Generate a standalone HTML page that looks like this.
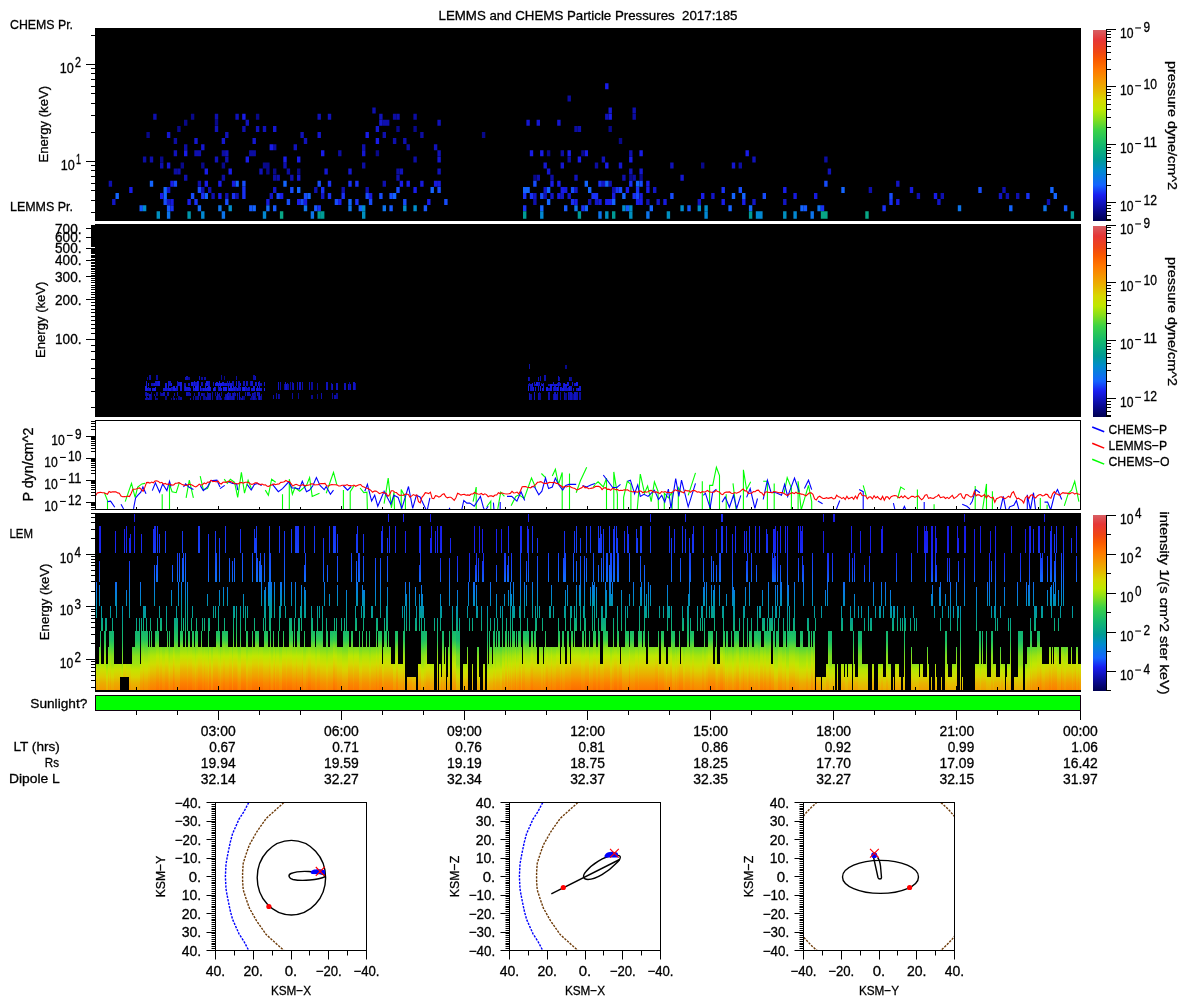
<!DOCTYPE html><html><head><meta charset="utf-8"><style>html,body{margin:0;padding:0;background:#fff;width:1200px;height:1000px;overflow:hidden}svg{display:block;will-change:transform}text{font-family:"Liberation Sans",sans-serif;stroke:#000;stroke-width:0.3px}</style></head><body><svg width="1200" height="1000" viewBox="0 0 1200 1000" font-family="Liberation Sans, sans-serif" fill="#000">
<defs>
<linearGradient id="cm" x1="0" y1="1" x2="0" y2="0"><stop offset="0.000" stop-color="#000050"/><stop offset="0.060" stop-color="#0a0a96"/><stop offset="0.136" stop-color="#191ef0"/><stop offset="0.188" stop-color="#1464ff"/><stop offset="0.267" stop-color="#008ccd"/><stop offset="0.319" stop-color="#009b96"/><stop offset="0.398" stop-color="#14b96e"/><stop offset="0.476" stop-color="#3cd246"/><stop offset="0.529" stop-color="#82de1e"/><stop offset="0.581" stop-color="#bee800"/><stop offset="0.634" stop-color="#d7d700"/><stop offset="0.686" stop-color="#e8b400"/><stop offset="0.738" stop-color="#f59600"/><stop offset="0.790" stop-color="#ff7800"/><stop offset="0.843" stop-color="#fa5a00"/><stop offset="0.885" stop-color="#f04614"/><stop offset="0.948" stop-color="#e63737"/><stop offset="1.000" stop-color="#d75f64"/></linearGradient>
</defs>
<rect width="1200" height="1000" fill="#fff"/>
<text x="588" y="20" font-size="13.5" text-anchor="middle" textLength="299" lengthAdjust="spacingAndGlyphs">LEMMS and CHEMS Particle Pressures&#160; 2017:185</text>
<rect x="95" y="28" width="986" height="193" fill="#000"/>
<path d="M95 161.5h-9M95 64.5h-9M95 212.5h-4M95 200.5h-4M95 190.5h-4M95 183.5h-4M95 176.5h-4M95 170.5h-4M95 165.5h-4M95 132.5h-4M95 115.5h-4M95 103.5h-4M95 93.5h-4M95 86.5h-4M95 79.5h-4M95 73.5h-4M95 68.5h-4M95 35.5h-4" stroke="#000" stroke-width="1" fill="none"/>
<text x="81" y="67.0" font-size="13.8" text-anchor="end" textLength="6" lengthAdjust="spacingAndGlyphs">2</text>
<text x="73.8" y="73.0" font-size="13.8" text-anchor="end" textLength="14" lengthAdjust="spacingAndGlyphs">10</text>
<text x="81" y="164.0" font-size="13.8" text-anchor="end" textLength="5" lengthAdjust="spacingAndGlyphs">1</text>
<text x="74.8" y="170.0" font-size="13.8" text-anchor="end" textLength="14" lengthAdjust="spacingAndGlyphs">10</text>
<text x="10" y="29" font-size="13.5" textLength="63" lengthAdjust="spacingAndGlyphs">CHEMS Pr.</text>
<text x="10" y="210.8" font-size="13.5" textLength="63" lengthAdjust="spacingAndGlyphs">LEMMS Pr.</text>
<text transform="translate(48.3,124.2) rotate(-90)" font-size="13.5" text-anchor="middle" textLength="76.5" lengthAdjust="spacingAndGlyphs">Energy (keV)</text>
<rect x="95" y="224" width="986" height="193" fill="#000"/>
<path d="M95 339.5h-9M95 299.5h-9M95 276.5h-9M95 260.5h-9M95 248.5h-9M95 237.5h-9M95 228.5h-9M95 407.5h-4M95 391.5h-4M95 378.5h-4M95 368.5h-4M95 359.5h-4M95 351.5h-4M95 345.5h-4M95 333.5h-4M95 328.5h-4M95 324.5h-4M95 320.5h-4M95 316.5h-4M95 312.5h-4M95 309.5h-4M95 305.5h-4M95 302.5h-4M95 297.5h-4M95 294.5h-4M95 292.5h-4M95 289.5h-4M95 287.5h-4M95 285.5h-4M95 282.5h-4M95 280.5h-4M95 278.5h-4M95 275.5h-4M95 273.5h-4M95 271.5h-4M95 269.5h-4M95 268.5h-4M95 266.5h-4M95 265.5h-4M95 263.5h-4M95 262.5h-4M95 259.5h-4M95 257.5h-4M95 256.5h-4M95 255.5h-4M95 253.5h-4M95 252.5h-4M95 251.5h-4M95 250.5h-4M95 249.5h-4M95 246.5h-4M95 245.5h-4M95 244.5h-4M95 243.5h-4M95 242.5h-4M95 241.5h-4M95 240.5h-4M95 239.5h-4M95 238.5h-4M95 236.5h-4M95 235.5h-4M95 234.5h-4M95 234.5h-4M95 233.5h-4M95 232.5h-4M95 231.5h-4M95 230.5h-4M95 229.5h-4M95 228.5h-4M95 227.5h-4M95 226.5h-4M95 225.5h-4M95 225.5h-4" stroke="#000" stroke-width="1" fill="none"/>
<text x="81.5" y="343.90000000000003" font-size="13.8" text-anchor="end" textLength="26.5" lengthAdjust="spacingAndGlyphs">100.</text>
<text x="81.5" y="304.5854825662841" font-size="13.8" text-anchor="end" textLength="26.5" lengthAdjust="spacingAndGlyphs">200.</text>
<text x="81.5" y="281.5879641336121" font-size="13.8" text-anchor="end" textLength="26.5" lengthAdjust="spacingAndGlyphs">300.</text>
<text x="81.5" y="265.2709651325681" font-size="13.8" text-anchor="end" textLength="26.5" lengthAdjust="spacingAndGlyphs">400.</text>
<text x="81.5" y="252.61451743371597" font-size="13.8" text-anchor="end" textLength="26.5" lengthAdjust="spacingAndGlyphs">500.</text>
<text x="81.5" y="242.2734466998962" font-size="13.8" text-anchor="end" textLength="26.5" lengthAdjust="spacingAndGlyphs">600.</text>
<text x="81.5" y="233.53019597413805" font-size="13.8" text-anchor="end" textLength="26.5" lengthAdjust="spacingAndGlyphs">700.</text>
<text transform="translate(44.6,319.8) rotate(-90)" font-size="13.5" text-anchor="middle" textLength="76.5" lengthAdjust="spacingAndGlyphs">Energy (keV)</text>
<rect x="95.5" y="420.5" width="985" height="89" fill="#fff" stroke="#000" stroke-width="1"/>
<path d="M95 502.5h-9M95 480.5h-9M95 458.5h-9M95 436.5h-9M95 509.5h-4M95 507.5h-4M95 505.5h-4M95 504.5h-4M95 503.5h-4M95 495.5h-4M95 492.5h-4M95 489.5h-4M95 487.5h-4M95 485.5h-4M95 483.5h-4M95 482.5h-4M95 481.5h-4M95 473.5h-4M95 470.5h-4M95 467.5h-4M95 465.5h-4M95 463.5h-4M95 461.5h-4M95 460.5h-4M95 459.5h-4M95 451.5h-4M95 448.5h-4M95 445.5h-4M95 443.5h-4M95 441.5h-4M95 439.5h-4M95 438.5h-4M95 437.5h-4M95 429.5h-4M95 426.5h-4M95 423.5h-4M95 421.5h-4" stroke="#000" stroke-width="1" fill="none"/>
<text x="81.5" y="439.0" font-size="13.8" text-anchor="end" textLength="6.6" lengthAdjust="spacingAndGlyphs">9</text>
<rect x="66.9" y="434.9" width="5.8" height="1.1" fill="#000"/>
<text x="64.7" y="445.0" font-size="13.8" text-anchor="end" textLength="13.5" lengthAdjust="spacingAndGlyphs">10</text>
<text x="81.5" y="461.0" font-size="13.8" text-anchor="end" textLength="13.5" lengthAdjust="spacingAndGlyphs">10</text>
<rect x="60.0" y="456.9" width="5.8" height="1.1" fill="#000"/>
<text x="57.8" y="467.0" font-size="13.8" text-anchor="end" textLength="13.5" lengthAdjust="spacingAndGlyphs">10</text>
<text x="81.5" y="483.0" font-size="13.8" text-anchor="end" textLength="13.5" lengthAdjust="spacingAndGlyphs">11</text>
<rect x="60.0" y="478.9" width="5.8" height="1.1" fill="#000"/>
<text x="57.8" y="489.0" font-size="13.8" text-anchor="end" textLength="13.5" lengthAdjust="spacingAndGlyphs">10</text>
<text x="81.5" y="505.0" font-size="13.8" text-anchor="end" textLength="13.5" lengthAdjust="spacingAndGlyphs">12</text>
<rect x="60.0" y="500.9" width="5.8" height="1.1" fill="#000"/>
<text x="57.8" y="511.0" font-size="13.8" text-anchor="end" textLength="13.5" lengthAdjust="spacingAndGlyphs">10</text>
<text transform="translate(32.7,464.6) rotate(-90)" font-size="13.8" text-anchor="middle" textLength="74" lengthAdjust="spacingAndGlyphs">P dyn/cm^2</text>
<path d="M136.5 509V507M177.5 509V507M218.5 509V506M259.5 509V507M300.5 509V507M341.5 509V506M382.5 509V507M423.5 509V507M464.5 509V506M505.5 509V507M546.5 509V507M587.5 509V506M628.5 509V507M669.5 509V507M710.5 509V506M751.5 509V507M792.5 509V507M833.5 509V506M874.5 509V507M915.5 509V507M956.5 509V506M997.5 509V507M1038.5 509V507" stroke="#000" stroke-width="1" fill="none"/>
<path d="M1092.2 427L1104.2 431.8" stroke="#0000ff" stroke-width="1.5"/>
<text x="1108.5" y="433.6" font-size="13.5" textLength="58.5" lengthAdjust="spacingAndGlyphs">CHEMS−P</text>
<path d="M1092.2 443.3L1104.2 448.1" stroke="#ff0000" stroke-width="1.5"/>
<text x="1108.5" y="449.90000000000003" font-size="13.5" textLength="58.5" lengthAdjust="spacingAndGlyphs">LEMMS−P</text>
<path d="M1092.2 459.3L1104.2 464.1" stroke="#00ff00" stroke-width="1.5"/>
<text x="1108.5" y="465.90000000000003" font-size="13.5" textLength="61" lengthAdjust="spacingAndGlyphs">CHEMS−O</text>
<rect x="95" y="513" width="986" height="179" fill="#000"/>
<path d="M95 659.5h-9M95 606.5h-9M95 554.5h-9M95 687.5h-4M95 680.5h-4M95 675.5h-4M95 671.5h-4M95 667.5h-4M95 664.5h-4M95 661.5h-4M95 643.5h-4M95 634.5h-4M95 627.5h-4M95 622.5h-4M95 618.5h-4M95 615.5h-4M95 611.5h-4M95 609.5h-4M95 591.5h-4M95 581.5h-4M95 575.5h-4M95 570.5h-4M95 565.5h-4M95 562.5h-4M95 559.5h-4M95 556.5h-4M95 538.5h-4M95 529.5h-4M95 522.5h-4M95 517.5h-4M95 513.5h-4" stroke="#000" stroke-width="1" fill="none"/>
<text x="81" y="556.8" font-size="13.8" text-anchor="end" textLength="6.5" lengthAdjust="spacingAndGlyphs">4</text>
<text x="73.3" y="562.8" font-size="13.8" text-anchor="end" textLength="13.5" lengthAdjust="spacingAndGlyphs">10</text>
<text x="81" y="609.4" font-size="13.8" text-anchor="end" textLength="6.5" lengthAdjust="spacingAndGlyphs">3</text>
<text x="73.3" y="615.4" font-size="13.8" text-anchor="end" textLength="13.5" lengthAdjust="spacingAndGlyphs">10</text>
<text x="81" y="662.0" font-size="13.8" text-anchor="end" textLength="6.5" lengthAdjust="spacingAndGlyphs">2</text>
<text x="73.3" y="668.0" font-size="13.8" text-anchor="end" textLength="13.5" lengthAdjust="spacingAndGlyphs">10</text>
<text x="9.5" y="537.5" font-size="13.5" textLength="23.5" lengthAdjust="spacingAndGlyphs">LEM</text>
<text transform="translate(48.7,601.9) rotate(-90)" font-size="13.5" text-anchor="middle" textLength="76.5" lengthAdjust="spacingAndGlyphs">Energy (keV)</text>
<rect x="95.5" y="695.5" width="985" height="15" fill="#00ff00" stroke="#100010" stroke-width="1"/>
<text x="87.3" y="708" font-size="13.5" text-anchor="end" textLength="57" lengthAdjust="spacingAndGlyphs">Sunlight?</text>
<path d="M136.5 711v4M177.5 711v4M218.5 711v9M259.5 711v4M300.5 711v4M341.5 711v9M382.5 711v4M423.5 711v4M464.5 711v9M505.5 711v4M546.5 711v4M587.5 711v9M628.5 711v4M669.5 711v4M710.5 711v9M751.5 711v4M792.5 711v4M833.5 711v9M874.5 711v4M915.5 711v4M956.5 711v9M997.5 711v4M1038.5 711v4M1080.5 711v9" stroke="#000" stroke-width="1" fill="none"/>
<text x="235.6875" y="736" font-size="13.8" text-anchor="end" textLength="34.8" lengthAdjust="spacingAndGlyphs">03:00</text>
<text x="235.6875" y="752" font-size="13.8" text-anchor="end" textLength="26.5" lengthAdjust="spacingAndGlyphs">0.67</text>
<text x="235.6875" y="768" font-size="13.8" text-anchor="end" textLength="34.8" lengthAdjust="spacingAndGlyphs">19.94</text>
<text x="235.6875" y="784" font-size="13.8" text-anchor="end" textLength="34.8" lengthAdjust="spacingAndGlyphs">32.14</text>
<text x="358.77500000000003" y="736" font-size="13.8" text-anchor="end" textLength="34.8" lengthAdjust="spacingAndGlyphs">06:00</text>
<text x="358.77500000000003" y="752" font-size="13.8" text-anchor="end" textLength="26.5" lengthAdjust="spacingAndGlyphs">0.71</text>
<text x="358.77500000000003" y="768" font-size="13.8" text-anchor="end" textLength="34.8" lengthAdjust="spacingAndGlyphs">19.59</text>
<text x="358.77500000000003" y="784" font-size="13.8" text-anchor="end" textLength="34.8" lengthAdjust="spacingAndGlyphs">32.27</text>
<text x="481.86250000000007" y="736" font-size="13.8" text-anchor="end" textLength="34.8" lengthAdjust="spacingAndGlyphs">09:00</text>
<text x="481.86250000000007" y="752" font-size="13.8" text-anchor="end" textLength="26.5" lengthAdjust="spacingAndGlyphs">0.76</text>
<text x="481.86250000000007" y="768" font-size="13.8" text-anchor="end" textLength="34.8" lengthAdjust="spacingAndGlyphs">19.19</text>
<text x="481.86250000000007" y="784" font-size="13.8" text-anchor="end" textLength="34.8" lengthAdjust="spacingAndGlyphs">32.34</text>
<text x="604.9499999999999" y="736" font-size="13.8" text-anchor="end" textLength="34.8" lengthAdjust="spacingAndGlyphs">12:00</text>
<text x="604.9499999999999" y="752" font-size="13.8" text-anchor="end" textLength="26.5" lengthAdjust="spacingAndGlyphs">0.81</text>
<text x="604.9499999999999" y="768" font-size="13.8" text-anchor="end" textLength="34.8" lengthAdjust="spacingAndGlyphs">18.75</text>
<text x="604.9499999999999" y="784" font-size="13.8" text-anchor="end" textLength="34.8" lengthAdjust="spacingAndGlyphs">32.37</text>
<text x="728.0374999999999" y="736" font-size="13.8" text-anchor="end" textLength="34.8" lengthAdjust="spacingAndGlyphs">15:00</text>
<text x="728.0374999999999" y="752" font-size="13.8" text-anchor="end" textLength="26.5" lengthAdjust="spacingAndGlyphs">0.86</text>
<text x="728.0374999999999" y="768" font-size="13.8" text-anchor="end" textLength="34.8" lengthAdjust="spacingAndGlyphs">18.25</text>
<text x="728.0374999999999" y="784" font-size="13.8" text-anchor="end" textLength="34.8" lengthAdjust="spacingAndGlyphs">32.35</text>
<text x="851.125" y="736" font-size="13.8" text-anchor="end" textLength="34.8" lengthAdjust="spacingAndGlyphs">18:00</text>
<text x="851.125" y="752" font-size="13.8" text-anchor="end" textLength="26.5" lengthAdjust="spacingAndGlyphs">0.92</text>
<text x="851.125" y="768" font-size="13.8" text-anchor="end" textLength="34.8" lengthAdjust="spacingAndGlyphs">17.70</text>
<text x="851.125" y="784" font-size="13.8" text-anchor="end" textLength="34.8" lengthAdjust="spacingAndGlyphs">32.27</text>
<text x="974.2125" y="736" font-size="13.8" text-anchor="end" textLength="34.8" lengthAdjust="spacingAndGlyphs">21:00</text>
<text x="974.2125" y="752" font-size="13.8" text-anchor="end" textLength="26.5" lengthAdjust="spacingAndGlyphs">0.99</text>
<text x="974.2125" y="768" font-size="13.8" text-anchor="end" textLength="34.8" lengthAdjust="spacingAndGlyphs">17.09</text>
<text x="974.2125" y="784" font-size="13.8" text-anchor="end" textLength="34.8" lengthAdjust="spacingAndGlyphs">32.15</text>
<text x="1097.8" y="736" font-size="13.8" text-anchor="end" textLength="34.8" lengthAdjust="spacingAndGlyphs">00:00</text>
<text x="1097.8" y="752" font-size="13.8" text-anchor="end" textLength="26.5" lengthAdjust="spacingAndGlyphs">1.06</text>
<text x="1097.8" y="768" font-size="13.8" text-anchor="end" textLength="34.8" lengthAdjust="spacingAndGlyphs">16.42</text>
<text x="1097.8" y="784" font-size="13.8" text-anchor="end" textLength="34.8" lengthAdjust="spacingAndGlyphs">31.97</text>
<text x="59.8" y="751" font-size="13.5" text-anchor="end" textLength="46.3" lengthAdjust="spacingAndGlyphs">LT (hrs)</text>
<text x="59.0" y="767" font-size="13.5" text-anchor="end" textLength="14.2" lengthAdjust="spacingAndGlyphs">Rs</text>
<text x="59.8" y="783" font-size="13.5" text-anchor="end" textLength="50.9" lengthAdjust="spacingAndGlyphs">Dipole L</text>
<rect x="1093" y="30" width="13" height="191" fill="url(#cm)"/>
<path d="M1106.5 30V221" stroke="#000" stroke-width="1" fill="none"/>
<path d="M1106 29.5h10M1106 69.5h5M1106 59.5h5M1106 52.5h5M1106 46.5h5M1106 41.5h5M1106 37.5h5M1106 34.5h5M1106 31.5h5M1106 86.5h10M1106 127.5h5M1106 117.5h5M1106 109.5h5M1106 104.5h5M1106 99.5h5M1106 95.5h5M1106 92.5h5M1106 89.5h5M1106 144.5h10M1106 185.5h5M1106 174.5h5M1106 167.5h5M1106 161.5h5M1106 157.5h5M1106 153.5h5M1106 150.5h5M1106 147.5h5M1106 202.5h10M1106 219.5h5M1106 215.5h5M1106 211.5h5M1106 208.5h5M1106 205.5h5M1106 220.5h5" stroke="#000" stroke-width="1" fill="none"/>
<text x="1150.1999999999998" y="31.5" font-size="13.8" text-anchor="end" textLength="6.6" lengthAdjust="spacingAndGlyphs">9</text>
<rect x="1135.2" y="27.4" width="5.8" height="1.1" fill="#000"/>
<text x="1120" y="37.5" font-size="13.8" textLength="13.5" lengthAdjust="spacingAndGlyphs">10</text>
<text x="1157.1" y="89.3" font-size="13.8" text-anchor="end" textLength="13.5" lengthAdjust="spacingAndGlyphs">10</text>
<rect x="1135.2" y="85.2" width="5.8" height="1.1" fill="#000"/>
<text x="1120" y="95.3" font-size="13.8" textLength="13.5" lengthAdjust="spacingAndGlyphs">10</text>
<text x="1157.1" y="147.1" font-size="13.8" text-anchor="end" textLength="13.5" lengthAdjust="spacingAndGlyphs">11</text>
<rect x="1135.2" y="143.0" width="5.8" height="1.1" fill="#000"/>
<text x="1120" y="153.1" font-size="13.8" textLength="13.5" lengthAdjust="spacingAndGlyphs">10</text>
<text x="1157.1" y="204.89999999999998" font-size="13.8" text-anchor="end" textLength="13.5" lengthAdjust="spacingAndGlyphs">12</text>
<rect x="1135.2" y="200.8" width="5.8" height="1.1" fill="#000"/>
<text x="1120" y="210.89999999999998" font-size="13.8" textLength="13.5" lengthAdjust="spacingAndGlyphs">10</text>
<text transform="translate(1167.6,125.5) rotate(90)" font-size="13.5" text-anchor="middle" textLength="129" lengthAdjust="spacingAndGlyphs">pressure dyne/cm^2</text>
<rect x="1093" y="226" width="13" height="191" fill="url(#cm)"/>
<path d="M1106.5 226V417" stroke="#000" stroke-width="1" fill="none"/>
<path d="M1106 225.5h10M1106 265.5h5M1106 255.5h5M1106 248.5h5M1106 242.5h5M1106 237.5h5M1106 233.5h5M1106 230.5h5M1106 227.5h5M1106 282.5h10M1106 323.5h5M1106 313.5h5M1106 305.5h5M1106 300.5h5M1106 295.5h5M1106 291.5h5M1106 288.5h5M1106 285.5h5M1106 340.5h10M1106 381.5h5M1106 370.5h5M1106 363.5h5M1106 357.5h5M1106 353.5h5M1106 349.5h5M1106 346.5h5M1106 343.5h5M1106 398.5h10M1106 415.5h5M1106 411.5h5M1106 407.5h5M1106 404.5h5M1106 401.5h5M1106 416.5h5" stroke="#000" stroke-width="1" fill="none"/>
<text x="1150.1999999999998" y="227.5" font-size="13.8" text-anchor="end" textLength="6.6" lengthAdjust="spacingAndGlyphs">9</text>
<rect x="1135.2" y="223.4" width="5.8" height="1.1" fill="#000"/>
<text x="1120" y="233.5" font-size="13.8" textLength="13.5" lengthAdjust="spacingAndGlyphs">10</text>
<text x="1157.1" y="285.3" font-size="13.8" text-anchor="end" textLength="13.5" lengthAdjust="spacingAndGlyphs">10</text>
<rect x="1135.2" y="281.2" width="5.8" height="1.1" fill="#000"/>
<text x="1120" y="291.3" font-size="13.8" textLength="13.5" lengthAdjust="spacingAndGlyphs">10</text>
<text x="1157.1" y="343.1" font-size="13.8" text-anchor="end" textLength="13.5" lengthAdjust="spacingAndGlyphs">11</text>
<rect x="1135.2" y="339.0" width="5.8" height="1.1" fill="#000"/>
<text x="1120" y="349.1" font-size="13.8" textLength="13.5" lengthAdjust="spacingAndGlyphs">10</text>
<text x="1157.1" y="400.9" font-size="13.8" text-anchor="end" textLength="13.5" lengthAdjust="spacingAndGlyphs">12</text>
<rect x="1135.2" y="396.8" width="5.8" height="1.1" fill="#000"/>
<text x="1120" y="406.9" font-size="13.8" textLength="13.5" lengthAdjust="spacingAndGlyphs">10</text>
<text transform="translate(1167.6,321.5) rotate(90)" font-size="13.5" text-anchor="middle" textLength="129" lengthAdjust="spacingAndGlyphs">pressure dyne/cm^2</text>
<rect x="1093" y="515" width="13" height="176" fill="url(#cm)"/>
<path d="M1106.5 515V691" stroke="#000" stroke-width="1" fill="none"/>
<path d="M1106 515.5h10M1106 534.5h5M1106 554.5h10M1106 573.5h5M1106 593.5h10M1106 612.5h5M1106 632.5h10M1106 651.5h5M1106 671.5h10M1106 690.5h5" stroke="#000" stroke-width="1" fill="none"/>
<text x="1141.5" y="517.6" font-size="13.8" text-anchor="end" textLength="6.5" lengthAdjust="spacingAndGlyphs">4</text>
<text x="1120" y="523.6" font-size="13.8" textLength="13.5" lengthAdjust="spacingAndGlyphs">10</text>
<text x="1141.5" y="556.6" font-size="13.8" text-anchor="end" textLength="6.5" lengthAdjust="spacingAndGlyphs">2</text>
<text x="1120" y="562.6" font-size="13.8" textLength="13.5" lengthAdjust="spacingAndGlyphs">10</text>
<text x="1141.5" y="595.6" font-size="13.8" text-anchor="end" textLength="6.5" lengthAdjust="spacingAndGlyphs">0</text>
<text x="1120" y="601.6" font-size="13.8" textLength="13.5" lengthAdjust="spacingAndGlyphs">10</text>
<text x="1150.1999999999998" y="634.6" font-size="13.8" text-anchor="end" textLength="6.6" lengthAdjust="spacingAndGlyphs">2</text>
<rect x="1135.2" y="630.5" width="5.8" height="1.1" fill="#000"/>
<text x="1120" y="640.6" font-size="13.8" textLength="13.5" lengthAdjust="spacingAndGlyphs">10</text>
<text x="1150.1999999999998" y="673.6" font-size="13.8" text-anchor="end" textLength="6.6" lengthAdjust="spacingAndGlyphs">4</text>
<rect x="1135.2" y="669.5" width="5.8" height="1.1" fill="#000"/>
<text x="1120" y="679.6" font-size="13.8" textLength="13.5" lengthAdjust="spacingAndGlyphs">10</text>
<text transform="translate(1159.8,603.0) rotate(90)" font-size="13.5" text-anchor="middle" textLength="183" lengthAdjust="spacingAndGlyphs">intensity 1/(s cm^2 ster keV)</text>
<defs>
<linearGradient id="lg0" gradientUnits="userSpaceOnUse" x1="0" y1="513.0" x2="0" y2="690.0"><stop offset="0.000" stop-color="#1518d7"/><stop offset="0.153" stop-color="#171be3"/><stop offset="0.237" stop-color="#191eef"/><stop offset="0.311" stop-color="#1831f4"/><stop offset="0.356" stop-color="#1645f8"/><stop offset="0.407" stop-color="#1268fb"/><stop offset="0.463" stop-color="#087ce1"/><stop offset="0.525" stop-color="#008ec5"/><stop offset="0.593" stop-color="#009a9a"/><stop offset="0.633" stop-color="#07a589"/><stop offset="0.667" stop-color="#0eb07a"/><stop offset="0.718" stop-color="#12b672"/><stop offset="0.757" stop-color="#31cb51"/><stop offset="0.808" stop-color="#69da2c"/><stop offset="0.853" stop-color="#70db29"/><stop offset="0.887" stop-color="#a0e30f"/><stop offset="0.927" stop-color="#c7e200"/><stop offset="0.960" stop-color="#dbd000"/><stop offset="1.000" stop-color="#e6b800"/></linearGradient>
<linearGradient id="lg1" gradientUnits="userSpaceOnUse" x1="0" y1="513.0" x2="0" y2="690.0"><stop offset="0.000" stop-color="#161add"/><stop offset="0.153" stop-color="#181ce9"/><stop offset="0.237" stop-color="#1923f1"/><stop offset="0.311" stop-color="#1738f5"/><stop offset="0.356" stop-color="#164cfa"/><stop offset="0.407" stop-color="#116af7"/><stop offset="0.463" stop-color="#077ede"/><stop offset="0.525" stop-color="#0090bf"/><stop offset="0.593" stop-color="#009b95"/><stop offset="0.633" stop-color="#08a786"/><stop offset="0.667" stop-color="#0fb277"/><stop offset="0.718" stop-color="#16ba6c"/><stop offset="0.757" stop-color="#37cf4b"/><stop offset="0.808" stop-color="#79dc23"/><stop offset="0.853" stop-color="#89df1b"/><stop offset="0.887" stop-color="#b7e703"/><stop offset="0.927" stop-color="#d0db00"/><stop offset="0.960" stop-color="#e1c200"/><stop offset="1.000" stop-color="#ecac00"/></linearGradient>
<linearGradient id="lg2" gradientUnits="userSpaceOnUse" x1="0" y1="513.0" x2="0" y2="690.0"><stop offset="0.000" stop-color="#171be3"/><stop offset="0.153" stop-color="#191eef"/><stop offset="0.237" stop-color="#182af3"/><stop offset="0.311" stop-color="#173ef7"/><stop offset="0.356" stop-color="#1552fb"/><stop offset="0.407" stop-color="#106df4"/><stop offset="0.463" stop-color="#0681db"/><stop offset="0.525" stop-color="#0091ba"/><stop offset="0.593" stop-color="#029d93"/><stop offset="0.633" stop-color="#09a984"/><stop offset="0.667" stop-color="#11b475"/><stop offset="0.718" stop-color="#1cbe66"/><stop offset="0.757" stop-color="#40d344"/><stop offset="0.808" stop-color="#88df1b"/><stop offset="0.853" stop-color="#a0e30f"/><stop offset="0.887" stop-color="#c5e400"/><stop offset="0.927" stop-color="#d9d300"/><stop offset="0.960" stop-color="#e8b500"/><stop offset="1.000" stop-color="#f0a000"/></linearGradient>
<linearGradient id="lg3" gradientUnits="userSpaceOnUse" x1="0" y1="513.0" x2="0" y2="690.0"><stop offset="0.000" stop-color="#181ce7"/><stop offset="0.153" stop-color="#1922f1"/><stop offset="0.237" stop-color="#182ff4"/><stop offset="0.311" stop-color="#1643f8"/><stop offset="0.356" stop-color="#1558fc"/><stop offset="0.407" stop-color="#0f6ff2"/><stop offset="0.463" stop-color="#0583d9"/><stop offset="0.525" stop-color="#0092b6"/><stop offset="0.593" stop-color="#029f91"/><stop offset="0.633" stop-color="#0aaa82"/><stop offset="0.667" stop-color="#12b573"/><stop offset="0.718" stop-color="#21c161"/><stop offset="0.757" stop-color="#4cd53d"/><stop offset="0.808" stop-color="#92e116"/><stop offset="0.853" stop-color="#b1e606"/><stop offset="0.887" stop-color="#ccdf00"/><stop offset="0.927" stop-color="#dec900"/><stop offset="0.960" stop-color="#ebac00"/><stop offset="1.000" stop-color="#f49800"/></linearGradient>
<linearGradient id="lg4" gradientUnits="userSpaceOnUse" x1="0" y1="513.0" x2="0" y2="690.0"><stop offset="0.000" stop-color="#181dec"/><stop offset="0.153" stop-color="#1827f2"/><stop offset="0.237" stop-color="#1734f5"/><stop offset="0.311" stop-color="#1648f9"/><stop offset="0.356" stop-color="#155dfd"/><stop offset="0.407" stop-color="#0e70ef"/><stop offset="0.463" stop-color="#0485d6"/><stop offset="0.525" stop-color="#0093b2"/><stop offset="0.593" stop-color="#03a08f"/><stop offset="0.633" stop-color="#0bac80"/><stop offset="0.667" stop-color="#13b771"/><stop offset="0.718" stop-color="#25c45d"/><stop offset="0.757" stop-color="#58d736"/><stop offset="0.808" stop-color="#9de211"/><stop offset="0.853" stop-color="#c0e700"/><stop offset="0.887" stop-color="#d3da00"/><stop offset="0.927" stop-color="#e3bf00"/><stop offset="0.960" stop-color="#efa300"/><stop offset="1.000" stop-color="#f78f00"/></linearGradient>
<linearGradient id="lg5" gradientUnits="userSpaceOnUse" x1="0" y1="513.0" x2="0" y2="690.0"><stop offset="0.000" stop-color="#191ef0"/><stop offset="0.153" stop-color="#182cf3"/><stop offset="0.237" stop-color="#1739f6"/><stop offset="0.311" stop-color="#164dfa"/><stop offset="0.356" stop-color="#1462fe"/><stop offset="0.407" stop-color="#0d72ed"/><stop offset="0.463" stop-color="#0387d4"/><stop offset="0.525" stop-color="#0094ae"/><stop offset="0.593" stop-color="#04a28d"/><stop offset="0.633" stop-color="#0cad7e"/><stop offset="0.667" stop-color="#14b86f"/><stop offset="0.718" stop-color="#2ac758"/><stop offset="0.757" stop-color="#64d92f"/><stop offset="0.808" stop-color="#a7e40c"/><stop offset="0.853" stop-color="#c7e200"/><stop offset="0.887" stop-color="#d9d300"/><stop offset="0.927" stop-color="#e8b500"/><stop offset="0.960" stop-color="#f39b00"/><stop offset="1.000" stop-color="#fa8600"/></linearGradient>
<linearGradient id="lg6" gradientUnits="userSpaceOnUse" x1="0" y1="513.0" x2="0" y2="690.0"><stop offset="0.000" stop-color="#1923f1"/><stop offset="0.153" stop-color="#1831f4"/><stop offset="0.237" stop-color="#173ef7"/><stop offset="0.311" stop-color="#1552fb"/><stop offset="0.356" stop-color="#1365fe"/><stop offset="0.407" stop-color="#0c74eb"/><stop offset="0.463" stop-color="#0288d1"/><stop offset="0.525" stop-color="#0096aa"/><stop offset="0.593" stop-color="#05a38b"/><stop offset="0.633" stop-color="#0dae7c"/><stop offset="0.667" stop-color="#15ba6d"/><stop offset="0.718" stop-color="#2fca53"/><stop offset="0.757" stop-color="#70db29"/><stop offset="0.808" stop-color="#b1e606"/><stop offset="0.853" stop-color="#cedd00"/><stop offset="0.887" stop-color="#dec900"/><stop offset="0.927" stop-color="#ebac00"/><stop offset="0.960" stop-color="#f69200"/><stop offset="1.000" stop-color="#fd7e00"/></linearGradient>
<linearGradient id="lg7" gradientUnits="userSpaceOnUse" x1="0" y1="513.0" x2="0" y2="690.0"><stop offset="0.000" stop-color="#1828f2"/><stop offset="0.153" stop-color="#1736f5"/><stop offset="0.237" stop-color="#1643f8"/><stop offset="0.311" stop-color="#1558fc"/><stop offset="0.356" stop-color="#1367fb"/><stop offset="0.407" stop-color="#0b76e8"/><stop offset="0.463" stop-color="#018acf"/><stop offset="0.525" stop-color="#0097a6"/><stop offset="0.593" stop-color="#06a489"/><stop offset="0.633" stop-color="#0eb07a"/><stop offset="0.667" stop-color="#17bb6b"/><stop offset="0.718" stop-color="#33cd4f"/><stop offset="0.757" stop-color="#7bdd22"/><stop offset="0.808" stop-color="#bce801"/><stop offset="0.853" stop-color="#d5d800"/><stop offset="0.887" stop-color="#e3bf00"/><stop offset="0.927" stop-color="#efa300"/><stop offset="0.960" stop-color="#f98900"/><stop offset="1.000" stop-color="#ff7500"/></linearGradient>
<linearGradient id="lg8" gradientUnits="userSpaceOnUse" x1="0" y1="513.0" x2="0" y2="690.0"><stop offset="0.000" stop-color="#182df3"/><stop offset="0.153" stop-color="#173bf6"/><stop offset="0.237" stop-color="#1648f9"/><stop offset="0.311" stop-color="#155dfd"/><stop offset="0.356" stop-color="#1269f9"/><stop offset="0.407" stop-color="#0a78e6"/><stop offset="0.463" stop-color="#008ccc"/><stop offset="0.525" stop-color="#0098a2"/><stop offset="0.593" stop-color="#07a688"/><stop offset="0.633" stop-color="#0fb178"/><stop offset="0.667" stop-color="#19bc69"/><stop offset="0.718" stop-color="#38cf4a"/><stop offset="0.757" stop-color="#87df1c"/><stop offset="0.808" stop-color="#c1e600"/><stop offset="0.853" stop-color="#dbd000"/><stop offset="0.887" stop-color="#e8b500"/><stop offset="0.927" stop-color="#f39b00"/><stop offset="0.960" stop-color="#fc8100"/><stop offset="1.000" stop-color="#fd6d00"/></linearGradient>
</defs>
<path d="M134 514h1v8h-1zM99 526h1v27h-1zM134 526h1v27h-1zM440 526h1v27h-1zM474 526h1v27h-1zM851 526h1v27h-1zM882 526h1v27h-1zM924 526h1v27h-1zM926 526h1v27h-1zM957 526h1v27h-1zM965 526h1v27h-1zM1011 526h1v27h-1zM932 526h1v56h-1zM935 526h1v56h-1zM1029 526h1v80h-1zM995 526h1v105h-1zM482 529h1v24h-1zM501 529h1v24h-1zM881 529h1v24h-1zM974 529h1v53h-1zM927 531h1v22h-1zM925 531h1v51h-1zM958 538h1v15h-1zM476 553h1v29h-1zM483 553h1v29h-1zM828 553h1v29h-1zM832 553h1v29h-1zM849 553h1v29h-1zM854 553h1v29h-1zM896 553h1v29h-1zM911 553h1v29h-1zM827 553h1v53h-1zM440 558h1v24h-1zM478 558h1v24h-1zM852 558h1v24h-1zM99 561h1v21h-1zM482 561h1v21h-1zM958 561h1v21h-1zM991 561h1v21h-1zM475 565h1v17h-1zM473 582h2v24h-2zM490 582h1v24h-1zM843 582h2v24h-2zM873 582h1v24h-1zM881 582h1v24h-1zM940 582h1v24h-1zM956 582h1v24h-1zM96 582h1v36h-1zM99 585h1v21h-1zM932 585h1v21h-1zM1028 585h1v21h-1zM476 585h1v33h-1zM421 585h1v105h-1zM939 587h1v19h-1zM976 587h1v44h-1zM422 594h1v24h-1zM854 594h1v24h-1zM440 594h1v37h-1zM423 606h1v12h-1zM477 606h1v12h-1zM500 606h1v12h-1zM821 606h1v12h-1zM875 606h1v12h-1zM879 606h1v12h-1zM934 606h1v12h-1zM942 606h1v12h-1zM958 606h1v12h-1zM991 606h1v12h-1zM994 606h1v12h-1zM481 606h1v25h-1zM841 606h1v25h-1zM850 606h1v25h-1zM893 606h1v25h-1zM897 606h1v25h-1zM957 606h1v25h-1zM472 618h1v13h-1zM490 618h1v13h-1zM842 618h1v13h-1zM851 618h2v13h-2zM900 618h1v13h-1zM902 618h1v13h-1zM905 618h1v13h-1zM910 618h1v13h-1zM940 618h1v13h-1zM997 618h1v13h-1zM112 618h1v72h-1zM136 618h1v72h-1zM139 618h1v72h-1zM1010 618h1v72h-1zM109 631h1v59h-1zM111 631h1v59h-1zM113 631h1v59h-1zM135 631h1v59h-1zM137 631h2v59h-2zM422 631h2v59h-2zM489 631h1v59h-1zM828 631h1v59h-1zM886 631h2v59h-2zM946 631h1v59h-1zM979 631h1v59h-1zM982 631h1v59h-1zM991 631h2v59h-2zM99 647h1v43h-1zM132 647h3v43h-3zM477 647h2v43h-2zM490 647h2v43h-2zM495 647h1v43h-1zM500 647h2v43h-2zM911 647h1v43h-1zM927 647h1v43h-1zM956 647h1v43h-1zM1027 647h3v43h-3zM121 664h1v13h-1zM96 664h2v26h-2zM131 664h1v26h-1zM439 664h2v26h-2zM463 664h4v26h-4zM472 664h1v26h-1zM483 664h2v26h-2zM492 664h1v26h-1zM826 664h2v26h-2zM832 664h1v26h-1zM841 664h3v26h-3zM848 664h4v26h-4zM854 664h1v26h-1zM872 664h2v26h-2zM879 664h1v26h-1zM881 664h2v26h-2zM895 664h4v26h-4zM920 664h3v26h-3zM935 664h1v26h-1zM975 664h4v26h-4zM981 664h1v26h-1zM983 664h3v26h-3zM994 664h2v26h-2zM1001 664h2v26h-2zM1007 664h1v26h-1zM844 677h1v13h-1zM855 677h3v13h-3zM893 677h1v13h-1zM899 677h2v13h-2zM919 677h1v13h-1zM923 677h4v13h-4zM996 677h4v13h-4z" fill="url(#lg2)"/>
<path d="M823 514h1v8h-1zM833 514h2v8h-2zM964 514h1v8h-1zM479 526h1v27h-1zM870 526h1v27h-1zM917 526h1v27h-1zM947 526h2v27h-2zM964 526h1v27h-1zM980 526h1v27h-1zM931 526h1v56h-1zM1025 529h1v24h-1zM823 531h1v22h-1zM860 531h1v22h-1zM990 531h1v22h-1zM936 538h1v15h-1zM469 553h1v29h-1zM1004 553h1v29h-1zM1020 553h1v29h-1zM989 553h1v53h-1zM457 556h1v26h-1zM869 556h1v26h-1zM947 558h1v24h-1zM949 558h1v24h-1zM964 558h1v48h-1zM864 565h1v17h-1zM936 565h1v17h-1zM468 582h1v24h-1zM885 582h1v24h-1zM987 582h1v24h-1zM1017 582h1v24h-1zM1026 582h1v24h-1zM950 582h1v49h-1zM1004 587h1v19h-1zM825 590h1v16h-1zM890 590h1v28h-1zM457 590h1v100h-1zM931 594h1v12h-1zM945 594h1v12h-1zM858 606h1v12h-1zM861 606h1v12h-1zM880 606h1v12h-1zM883 606h1v12h-1zM891 606h1v12h-1zM894 606h1v12h-1zM913 606h1v12h-1zM948 606h1v12h-1zM953 606h1v12h-1zM1000 606h1v12h-1zM868 606h1v25h-1zM122 606h1v71h-1zM456 606h1v84h-1zM487 606h1v84h-1zM904 606h1v84h-1zM960 606h1v84h-1zM106 618h1v13h-1zM469 618h1v13h-1zM864 618h1v13h-1zM870 618h2v13h-2zM892 618h1v13h-1zM914 618h1v13h-1zM916 618h1v13h-1zM1008 618h1v13h-1zM459 618h1v72h-1zM458 631h1v59h-1zM829 631h3v59h-3zM853 631h1v59h-1zM858 631h4v59h-4zM945 631h1v59h-1zM980 631h1v59h-1zM986 631h1v59h-1zM1018 631h5v59h-5zM1000 647h1v43h-1zM98 664h1v26h-1zM106 664h2v26h-2zM488 664h1v26h-1zM833 664h2v26h-2zM837 664h1v26h-1zM845 664h2v26h-2zM862 664h6v26h-6zM878 664h1v26h-1zM880 664h1v26h-1zM888 664h3v26h-3zM912 664h7v26h-7zM928 664h1v26h-1zM947 664h1v26h-1zM952 664h4v26h-4zM993 664h1v26h-1zM1003 664h2v26h-2zM1008 664h2v26h-2zM1025 664h2v26h-2zM479 677h1v13h-1zM822 677h4v13h-4zM847 677h1v13h-1zM883 677h3v13h-3zM903 677h1v13h-1zM931 677h1v13h-1zM936 677h1v13h-1zM941 677h1v13h-1zM948 677h4v13h-4zM962 677h1v13h-1zM987 677h4v13h-4zM1006 677h1v13h-1zM1014 677h4v13h-4z" fill="url(#lg1)"/>
<path d="M430 514h1v8h-1zM100 526h1v27h-1zM126 526h1v27h-1zM431 526h1v27h-1zM437 526h1v27h-1zM775 526h1v27h-1zM800 526h1v27h-1zM802 526h1v27h-1zM787 526h1v164h-1zM496 529h1v24h-1zM774 529h1v53h-1zM115 531h1v22h-1zM405 531h1v22h-1zM435 531h1v22h-1zM801 531h1v22h-1zM777 531h1v51h-1zM130 534h1v19h-1zM129 538h1v15h-1zM430 538h1v15h-1zM450 538h1v15h-1zM504 553h1v29h-1zM775 556h1v26h-1zM802 556h1v26h-1zM449 558h1v48h-1zM129 561h1v57h-1zM496 565h1v17h-1zM507 565h1v17h-1zM803 565h1v41h-1zM115 582h1v24h-1zM405 582h1v24h-1zM116 582h1v36h-1zM777 585h1v21h-1zM788 585h1v21h-1zM775 585h1v33h-1zM415 587h1v19h-1zM126 590h1v16h-1zM504 594h1v12h-1zM496 594h1v24h-1zM406 594h1v37h-1zM110 606h1v12h-1zM467 606h1v12h-1zM776 606h1v12h-1zM101 606h1v25h-1zM416 606h1v25h-1zM404 606h1v84h-1zM102 618h1v13h-1zM415 618h1v13h-1zM434 618h1v13h-1zM497 618h1v13h-1zM105 618h1v72h-1zM424 618h1v72h-1zM437 618h1v72h-1zM494 618h1v72h-1zM774 618h1v72h-1zM808 618h1v72h-1zM100 631h1v59h-1zM104 631h1v59h-1zM110 631h1v59h-1zM425 631h1v59h-1zM442 631h2v59h-2zM449 631h1v59h-1zM493 631h1v59h-1zM496 631h1v59h-1zM498 631h2v59h-2zM776 631h2v59h-2zM788 631h1v59h-1zM800 631h3v59h-3zM809 631h1v59h-1zM813 631h1v59h-1zM1031 631h1v59h-1zM108 647h1v43h-1zM445 647h1v43h-1zM448 647h1v43h-1zM467 647h1v43h-1zM497 647h1v43h-1zM504 647h1v43h-1zM507 647h1v43h-1zM775 647h1v43h-1zM786 647h1v43h-1zM799 647h1v43h-1zM803 647h3v43h-3zM810 647h1v43h-1zM120 664h1v13h-1zM126 664h3v13h-3zM101 664h3v26h-3zM114 664h6v26h-6zM129 664h2v26h-2zM430 664h4v26h-4zM412 677h4v13h-4zM447 677h1v13h-1zM817 677h4v13h-4z" fill="url(#lg3)"/>
<path d="M1044 514h1v8h-1zM395 526h1v27h-1zM419 526h1v27h-1zM441 526h1v27h-1zM521 526h1v27h-1zM759 526h1v27h-1zM798 526h1v27h-1zM1030 526h1v27h-1zM1044 526h1v27h-1zM1076 526h1v27h-1zM420 526h1v56h-1zM124 529h1v24h-1zM1033 529h1v24h-1zM141 534h1v19h-1zM732 534h1v72h-1zM511 553h1v29h-1zM747 553h1v29h-1zM1042 553h1v29h-1zM1076 556h1v26h-1zM798 558h1v24h-1zM419 565h1v17h-1zM140 582h1v24h-1zM1033 582h1v24h-1zM409 582h1v49h-1zM733 587h1v44h-1zM1058 590h1v16h-1zM511 594h1v12h-1zM419 594h1v37h-1zM144 606h2v12h-2zM402 606h1v12h-1zM420 606h1v12h-1zM441 606h1v12h-1zM759 606h1v12h-1zM1036 606h1v12h-1zM1042 606h1v12h-1zM1060 606h1v12h-1zM1072 606h1v12h-1zM1034 606h2v25h-2zM452 606h1v84h-1zM502 606h1v84h-1zM739 618h1v13h-1zM807 618h1v13h-1zM1058 618h1v13h-1zM141 618h1v72h-1zM146 618h1v72h-1zM747 618h1v72h-1zM783 618h1v72h-1zM1030 618h1v72h-1zM142 631h1v59h-1zM144 631h2v59h-2zM147 631h1v59h-1zM395 631h1v59h-1zM426 631h1v59h-1zM453 631h3v59h-3zM516 631h1v59h-1zM727 631h1v59h-1zM754 631h1v59h-1zM758 631h2v59h-2zM784 631h1v59h-1zM795 631h1v59h-1zM503 647h1v43h-1zM509 647h1v43h-1zM511 647h1v43h-1zM521 647h1v43h-1zM725 647h1v43h-1zM732 647h2v43h-2zM739 647h2v43h-2zM782 647h1v43h-1zM796 647h3v43h-3zM806 647h2v43h-2zM1032 647h5v43h-5zM1057 647h2v43h-2zM1064 647h2v43h-2zM1076 647h2v43h-2zM123 664h3v13h-3zM140 664h1v26h-1zM393 664h2v26h-2zM398 664h5v26h-5zM418 664h3v26h-3zM427 664h3v26h-3zM444 664h1v26h-1zM1042 664h3v26h-3zM1059 664h2v26h-2zM1072 664h1v26h-1zM1079 664h2v26h-2zM407 677h5v13h-5zM441 677h1v13h-1z" fill="url(#lg4)"/>
<path d="M403 514h1v8h-1zM528 514h1v8h-1zM382 526h1v27h-1zM508 526h1v27h-1zM527 526h1v27h-1zM726 526h1v27h-1zM735 526h1v27h-1zM755 526h1v27h-1zM780 526h1v27h-1zM785 526h1v27h-1zM1038 526h2v27h-2zM1051 526h1v56h-1zM1063 526h1v80h-1zM674 529h1v24h-1zM716 529h1v24h-1zM766 529h1v24h-1zM773 529h1v24h-1zM528 529h1v53h-1zM744 531h1v22h-1zM746 531h1v22h-1zM767 534h1v19h-1zM1071 538h1v15h-1zM359 553h1v29h-1zM505 553h1v29h-1zM690 553h1v29h-1zM751 553h1v29h-1zM772 553h1v29h-1zM812 553h1v53h-1zM508 556h1v26h-1zM1047 556h1v26h-1zM773 558h1v24h-1zM1041 558h1v24h-1zM526 561h1v21h-1zM746 561h1v21h-1zM327 565h1v17h-1zM716 565h1v17h-1zM756 565h1v17h-1zM780 565h1v41h-1zM704 582h1v24h-1zM781 582h1v24h-1zM513 582h1v36h-1zM768 582h1v36h-1zM510 582h1v108h-1zM794 582h1v108h-1zM526 585h1v21h-1zM1051 585h1v33h-1zM745 587h1v19h-1zM508 590h1v16h-1zM1047 590h1v16h-1zM346 590h1v100h-1zM734 590h1v100h-1zM726 594h1v12h-1zM361 606h1v12h-1zM514 606h1v12h-1zM701 606h1v12h-1zM744 606h1v12h-1zM779 606h1v12h-1zM814 606h1v12h-1zM1041 606h1v12h-1zM697 606h1v25h-1zM772 606h1v25h-1zM143 606h1v84h-1zM512 606h1v84h-1zM757 606h1v84h-1zM789 606h1v84h-1zM542 618h1v13h-1zM683 618h1v13h-1zM700 618h1v13h-1zM763 618h1v13h-1zM771 618h1v13h-1zM815 618h1v13h-1zM326 618h1v72h-1zM344 618h1v72h-1zM506 618h1v72h-1zM527 618h1v72h-1zM690 618h1v72h-1zM704 618h1v72h-1zM751 618h1v72h-1zM767 618h1v72h-1zM778 618h1v72h-1zM793 618h1v72h-1zM149 631h1v59h-1zM169 631h1v59h-1zM327 631h1v59h-1zM343 631h1v59h-1zM345 631h1v59h-1zM347 631h1v59h-1zM359 631h1v59h-1zM369 631h1v59h-1zM403 631h1v59h-1zM505 631h1v59h-1zM508 631h1v59h-1zM513 631h2v59h-2zM518 631h1v59h-1zM525 631h2v59h-2zM528 631h1v59h-1zM672 631h3v59h-3zM691 631h1v59h-1zM716 631h1v59h-1zM726 631h1v59h-1zM731 631h1v59h-1zM735 631h1v59h-1zM750 631h1v59h-1zM755 631h2v59h-2zM766 631h1v59h-1zM768 631h1v59h-1zM773 631h1v59h-1zM785 631h1v59h-1zM790 631h3v59h-3zM811 631h1v59h-1zM814 631h1v59h-1zM1037 631h3v59h-3zM148 647h1v43h-1zM342 647h1v43h-1zM360 647h2v43h-2zM370 647h1v43h-1zM383 647h1v43h-1zM517 647h1v43h-1zM529 647h1v43h-1zM541 647h2v43h-2zM544 647h1v43h-1zM676 647h1v43h-1zM683 647h2v43h-2zM694 647h8v43h-8zM705 647h1v43h-1zM728 647h3v43h-3zM741 647h2v43h-2zM744 647h3v43h-3zM748 647h1v43h-1zM752 647h2v43h-2zM763 647h1v43h-1zM779 647h3v43h-3zM812 647h1v43h-1zM1041 647h1v43h-1zM1062 647h2v43h-2zM1066 647h2v43h-2zM1071 647h1v43h-1zM382 664h1v26h-1zM666 664h1v26h-1zM717 664h1v26h-1zM771 664h2v26h-2zM1045 664h4v26h-4zM1051 664h1v26h-1zM1068 664h3v26h-3zM1073 664h2v26h-2zM1078 664h1v26h-1zM816 677h1v13h-1z" fill="url(#lg5)"/>
<path d="M388 514h1v8h-1zM685 514h1v8h-1zM154 526h2v27h-2zM279 526h1v27h-1zM304 526h1v27h-1zM329 526h1v27h-1zM389 526h1v27h-1zM627 526h1v27h-1zM669 526h1v27h-1zM693 526h1v27h-1zM703 526h1v27h-1zM749 526h1v27h-1zM1056 526h1v27h-1zM520 526h1v164h-1zM153 529h1v24h-1zM240 529h1v24h-1zM685 529h1v24h-1zM624 531h1v22h-1zM564 531h1v51h-1zM1050 531h1v51h-1zM159 534h1v19h-1zM337 534h1v19h-1zM363 534h1v19h-1zM628 534h1v19h-1zM692 534h1v19h-1zM1054 534h1v19h-1zM208 534h1v48h-1zM387 538h1v15h-1zM537 538h1v15h-1zM323 538h1v44h-1zM689 538h1v68h-1zM177 553h1v29h-1zM179 553h1v29h-1zM305 553h1v29h-1zM548 553h1v29h-1zM611 553h1v29h-1zM719 553h1v29h-1zM1040 553h1v29h-1zM610 553h1v53h-1zM1055 553h1v53h-1zM1061 553h1v53h-1zM337 556h1v26h-1zM363 556h1v26h-1zM387 556h1v26h-1zM537 556h1v62h-1zM563 558h1v24h-1zM703 558h1v24h-1zM375 558h1v48h-1zM232 561h1v21h-1zM1054 561h1v21h-1zM172 565h1v17h-1zM304 565h1v17h-1zM154 565h1v41h-1zM178 582h1v24h-1zM281 582h1v24h-1zM324 582h1v24h-1zM633 582h1v24h-1zM749 582h1v24h-1zM1053 582h1v24h-1zM271 582h1v36h-1zM280 582h1v36h-1zM524 582h1v36h-1zM706 582h1v36h-1zM337 585h1v21h-1zM362 585h1v21h-1zM719 585h1v21h-1zM667 585h1v46h-1zM703 587h1v19h-1zM1050 587h1v19h-1zM304 587h1v31h-1zM387 587h1v44h-1zM171 590h1v16h-1zM762 590h1v16h-1zM305 590h1v28h-1zM364 590h1v28h-1zM363 590h1v41h-1zM329 594h1v12h-1zM611 594h1v12h-1zM1054 594h1v12h-1zM688 594h1v96h-1zM159 606h1v12h-1zM247 606h1v12h-1zM371 606h2v12h-2zM519 606h1v12h-1zM539 606h1v12h-1zM549 606h2v12h-2zM553 606h1v12h-1zM564 606h1v12h-1zM627 606h1v12h-1zM668 606h2v12h-2zM760 606h1v12h-1zM279 606h1v25h-1zM702 606h1v25h-1zM176 606h1v84h-1zM240 606h1v84h-1zM322 606h1v84h-1zM386 606h1v84h-1zM535 606h1v84h-1zM625 606h1v84h-1zM687 606h1v84h-1zM723 606h1v84h-1zM743 606h1v84h-1zM150 618h1v13h-1zM341 618h1v13h-1zM377 618h1v13h-1zM536 618h1v13h-1zM762 618h1v13h-1zM1054 618h1v13h-1zM175 618h1v72h-1zM177 618h1v72h-1zM208 618h1v72h-1zM384 618h1v72h-1zM764 618h1v72h-1zM769 618h2v72h-2zM151 631h1v59h-1zM155 631h1v59h-1zM195 631h1v59h-1zM246 631h2v59h-2zM304 631h1v59h-1zM316 631h1v59h-1zM320 631h2v59h-2zM330 631h3v59h-3zM362 631h1v59h-1zM366 631h1v59h-1zM378 631h1v59h-1zM385 631h1v59h-1zM388 631h1v59h-1zM396 631h2v59h-2zM519 631h1v59h-1zM523 631h2v59h-2zM534 631h1v59h-1zM545 631h1v59h-1zM562 631h2v59h-2zM589 631h1v59h-1zM626 631h3v59h-3zM630 631h4v59h-4zM638 631h1v59h-1zM658 631h1v59h-1zM692 631h2v59h-2zM724 631h1v59h-1zM736 631h3v59h-3zM749 631h1v59h-1zM760 631h1v59h-1zM765 631h1v59h-1zM150 647h1v43h-1zM152 647h3v43h-3zM159 647h1v43h-1zM162 647h3v43h-3zM168 647h1v43h-1zM170 647h3v43h-3zM178 647h2v43h-2zM211 647h2v43h-2zM220 647h1v43h-1zM232 647h1v43h-1zM238 647h2v43h-2zM271 647h2v43h-2zM275 647h1v43h-1zM279 647h3v43h-3zM303 647h1v43h-1zM305 647h1v43h-1zM315 647h1v43h-1zM323 647h3v43h-3zM328 647h2v43h-2zM337 647h5v43h-5zM353 647h1v43h-1zM363 647h3v43h-3zM367 647h2v43h-2zM371 647h5v43h-5zM377 647h1v43h-1zM387 647h1v43h-1zM389 647h2v43h-2zM515 647h1v43h-1zM530 647h1v43h-1zM533 647h1v43h-1zM536 647h1v43h-1zM539 647h2v43h-2zM548 647h3v43h-3zM552 647h4v43h-4zM564 647h1v43h-1zM610 647h2v43h-2zM622 647h3v43h-3zM634 647h1v43h-1zM664 647h2v43h-2zM668 647h2v43h-2zM675 647h1v43h-1zM677 647h2v43h-2zM685 647h2v43h-2zM689 647h1v43h-1zM702 647h2v43h-2zM706 647h2v43h-2zM715 647h1v43h-1zM761 647h2v43h-2zM1040 647h1v43h-1zM1049 647h2v43h-2zM1052 647h1v43h-1zM1054 647h3v43h-3zM1061 647h1v43h-1zM391 664h2v26h-2zM522 664h1v26h-1zM537 664h2v26h-2zM543 664h1v26h-1zM560 664h1v26h-1zM667 664h1v26h-1zM718 664h2v26h-2zM1053 664h1v26h-1zM1075 664h1v26h-1z" fill="url(#lg6)"/>
<path d="M650 514h1v8h-1zM721 514h2v8h-2zM157 526h1v27h-1zM225 526h1v27h-1zM295 526h1v27h-1zM297 526h2v27h-2zM314 526h1v27h-1zM335 526h1v27h-1zM357 526h1v27h-1zM532 526h1v27h-1zM590 526h1v27h-1zM600 526h1v27h-1zM640 526h2v27h-2zM650 526h1v27h-1zM682 526h1v27h-1zM721 526h2v27h-2zM636 529h1v24h-1zM603 529h1v53h-1zM613 529h1v53h-1zM165 531h1v22h-1zM381 531h1v22h-1zM356 534h1v19h-1zM601 534h1v19h-1zM637 538h1v15h-1zM219 538h1v44h-1zM617 538h1v44h-1zM671 538h1v44h-1zM264 553h1v29h-1zM351 553h1v29h-1zM358 553h1v29h-1zM558 553h1v29h-1zM565 553h1v29h-1zM618 553h1v29h-1zM720 553h1v29h-1zM270 553h1v137h-1zM157 556h1v26h-1zM640 556h1v26h-1zM711 556h1v26h-1zM584 556h1v75h-1zM601 558h1v24h-1zM680 558h1v24h-1zM380 558h1v60h-1zM713 561h1v21h-1zM356 561h1v45h-1zM156 565h1v17h-1zM644 565h1v125h-1zM268 582h1v24h-1zM357 582h1v24h-1zM612 582h1v24h-1zM641 582h1v24h-1zM295 582h1v36h-1zM532 582h1v36h-1zM648 582h1v36h-1zM187 582h1v49h-1zM592 582h1v49h-1zM551 585h1v21h-1zM567 585h1v21h-1zM650 585h1v21h-1zM711 585h1v33h-1zM301 585h1v46h-1zM714 585h1v46h-1zM227 587h1v19h-1zM590 587h1v19h-1zM640 587h1v19h-1zM596 587h1v31h-1zM265 587h1v103h-1zM219 590h1v16h-1zM264 590h1v28h-1zM713 590h1v28h-1zM565 590h1v41h-1zM207 594h1v12h-1zM646 594h1v24h-1zM192 606h1v12h-1zM300 606h1v12h-1zM319 606h1v12h-1zM583 606h1v12h-1zM645 606h1v12h-1zM659 606h1v12h-1zM663 606h1v12h-1zM709 606h1v12h-1zM712 606h1v12h-1zM722 606h1v12h-1zM166 606h1v25h-1zM355 606h1v25h-1zM570 606h1v25h-1zM601 606h2v25h-2zM682 606h1v25h-1zM218 606h1v84h-1zM311 606h1v84h-1zM317 606h1v84h-1zM617 606h1v84h-1zM639 606h1v84h-1zM671 606h1v84h-1zM160 618h2v13h-2zM202 618h1v13h-1zM263 618h1v13h-1zM356 618h1v13h-1zM157 618h1v72h-1zM174 618h1v72h-1zM196 618h1v72h-1zM294 618h1v72h-1zM298 618h2v72h-2zM312 618h1v72h-1zM336 618h1v72h-1zM376 618h1v72h-1zM558 618h1v72h-1zM603 618h1v72h-1zM613 618h1v72h-1zM156 631h1v59h-1zM158 631h1v59h-1zM167 631h1v59h-1zM192 631h2v59h-2zM197 631h1v59h-1zM219 631h1v59h-1zM222 631h1v59h-1zM225 631h3v59h-3zM258 631h1v59h-1zM264 631h1v59h-1zM266 631h2v59h-2zM273 631h1v59h-1zM278 631h1v59h-1zM292 631h1v59h-1zM297 631h1v59h-1zM313 631h2v59h-2zM318 631h2v59h-2zM335 631h1v59h-1zM348 631h1v59h-1zM351 631h2v59h-2zM379 631h3v59h-3zM531 631h2v59h-2zM559 631h1v59h-1zM567 631h2v59h-2zM582 631h2v59h-2zM618 631h1v59h-1zM640 631h2v59h-2zM643 631h1v59h-1zM648 631h1v59h-1zM661 631h3v59h-3zM679 631h1v59h-1zM708 631h5v59h-5zM160 647h2v43h-2zM165 647h2v43h-2zM187 647h1v43h-1zM194 647h1v43h-1zM202 647h2v43h-2zM205 647h3v43h-3zM221 647h1v43h-1zM228 647h1v43h-1zM237 647h1v43h-1zM248 647h4v43h-4zM263 647h1v43h-1zM268 647h1v43h-1zM276 647h2v43h-2zM286 647h1v43h-1zM293 647h1v43h-1zM295 647h1v43h-1zM300 647h2v43h-2zM306 647h2v43h-2zM349 647h2v43h-2zM354 647h5v43h-5zM546 647h2v43h-2zM551 647h1v43h-1zM556 647h2v43h-2zM561 647h1v43h-1zM569 647h1v43h-1zM581 647h1v43h-1zM584 647h1v43h-1zM590 647h3v43h-3zM596 647h2v43h-2zM612 647h1v43h-1zM635 647h3v43h-3zM642 647h1v43h-1zM645 647h1v43h-1zM649 647h6v43h-6zM670 647h1v43h-1zM681 647h2v43h-2zM720 647h3v43h-3zM565 664h2v26h-2zM570 664h1v26h-1zM600 664h3v26h-3zM646 664h2v26h-2zM659 664h2v26h-2zM680 664h1v26h-1zM713 664h2v26h-2z" fill="url(#lg7)"/>
<path d="M198 526h2v27h-2zM296 526h1v27h-1zM333 526h2v27h-2zM576 526h1v27h-1zM586 526h1v27h-1zM598 526h1v27h-1zM609 526h1v27h-1zM616 526h1v27h-1zM256 526h1v56h-1zM614 526h1v56h-1zM269 526h1v105h-1zM254 529h1v24h-1zM291 529h1v24h-1zM182 531h1v22h-1zM574 531h1v22h-1zM215 531h1v51h-1zM284 531h1v75h-1zM255 538h1v15h-1zM580 538h1v15h-1zM599 538h1v15h-1zM183 553h1v29h-1zM216 553h1v29h-1zM242 553h1v29h-1zM252 553h1v29h-1zM260 553h1v29h-1zM573 553h1v29h-1zM593 553h1v29h-1zM606 553h2v29h-2zM629 553h1v29h-1zM185 553h1v137h-1zM580 556h1v75h-1zM182 558h1v24h-1zM229 558h1v24h-1zM234 558h1v24h-1zM257 558h1v24h-1zM586 558h1v24h-1zM259 561h1v21h-1zM576 561h1v21h-1zM598 565h1v17h-1zM261 565h1v41h-1zM609 565h1v41h-1zM291 582h1v24h-1zM274 582h1v36h-1zM181 582h1v108h-1zM594 582h1v108h-1zM605 582h1v108h-1zM579 585h1v21h-1zM593 585h1v21h-1zM576 585h1v46h-1zM223 587h1v19h-1zM606 590h1v28h-1zM621 590h1v41h-1zM629 594h1v12h-1zM243 594h1v24h-1zM213 606h1v12h-1zM215 606h1v12h-1zM234 606h1v12h-1zM285 606h1v12h-1zM571 606h1v12h-1zM245 606h1v25h-1zM233 606h1v84h-1zM236 606h1v84h-1zM574 606h1v84h-1zM183 618h1v13h-1zM191 618h1v13h-1zM204 618h1v13h-1zM209 618h1v13h-1zM254 618h1v13h-1zM575 618h1v13h-1zM224 618h1v72h-1zM289 618h3v72h-3zM334 618h1v72h-1zM585 618h1v72h-1zM598 618h1v72h-1zM604 618h1v72h-1zM180 631h1v59h-1zM182 631h1v59h-1zM188 631h2v59h-2zM201 631h1v59h-1zM216 631h2v59h-2zM223 631h1v59h-1zM252 631h1v59h-1zM255 631h3v59h-3zM283 631h1v59h-1zM333 631h1v59h-1zM571 631h2v59h-2zM593 631h1v59h-1zM595 631h1v59h-1zM599 631h1v59h-1zM606 631h2v59h-2zM173 647h1v43h-1zM183 647h2v43h-2zM186 647h1v43h-1zM190 647h2v43h-2zM198 647h3v43h-3zM204 647h1v43h-1zM209 647h2v43h-2zM213 647h3v43h-3zM229 647h3v43h-3zM234 647h2v43h-2zM241 647h5v43h-5zM253 647h2v43h-2zM259 647h4v43h-4zM269 647h1v43h-1zM274 647h1v43h-1zM282 647h1v43h-1zM284 647h2v43h-2zM287 647h2v43h-2zM296 647h1v43h-1zM302 647h1v43h-1zM308 647h3v43h-3zM573 647h1v43h-1zM575 647h6v43h-6zM586 647h3v43h-3zM608 647h2v43h-2zM614 647h3v43h-3zM619 647h1v43h-1zM621 647h1v43h-1zM629 647h1v43h-1zM655 647h3v43h-3zM620 664h1v26h-1z" fill="url(#lg8)"/>
<path d="M136.5 690V687M177.5 690V687M218.5 690V686M259.5 690V687M300.5 690V687M341.5 690V686M382.5 690V687M423.5 690V687M464.5 690V686M505.5 690V687M546.5 690V687M587.5 690V686M628.5 690V687M669.5 690V687M710.5 690V686M751.5 690V687M792.5 690V687M833.5 690V686M874.5 690V687M915.5 690V687M956.5 690V686M997.5 690V687M1038.5 690V687" stroke="#000" stroke-width="1" fill="none"/>
<rect x="95" y="690" width="986" height="2" fill="#000"/>
<defs><clipPath id="p3c"><rect x="96" y="421" width="984" height="88"/></clipPath></defs>
<g clip-path="url(#p3c)" fill="none" stroke-width="1.1" stroke-linejoin="miter">
<path d="M104.4 492.7L107.5 500.5L107.5 509.9M125.2 501.6L131.5 483.4L135.1 497.4L137.7 487.0L141.9 483.9L145.0 483.4M162.2 494.3L162.2 509.9M169.5 509.9L169.5 484.4L172.1 491.7L176.2 492.7L179.4 482.3M186.1 497.9L189.3 480.2L193.4 497.9M200.2 476.1L203.3 489.6L207.5 488.6L210.6 481.3M224.2 479.2L227.3 483.4L230.4 479.2L234.6 482.3L237.7 497.4L241.4 472.4L244.5 493.2L248.1 480.2L251.8 489.6M265.3 490.1L268.4 495.3L271.6 479.2L275.7 482.3M282.5 494.3L282.5 509.9M289.3 509.9L289.3 479.2L292.4 494.3L295.0 487.5L299.7 491.2L306.5 485.4L309.6 477.6L312.2 496.4L319.5 493.2M326.2 493.2L333.5 472.4L336.7 484.4M343.4 490.1L343.4 509.9M350.2 509.9L350.2 491.7L353.9 486.0M360.1 488.0L363.8 492.7L366.9 492.2L367.4 509.9M384.1 503.7L388.2 478.1L391.4 507.8L394.0 492.2L394.5 509.9M401.2 509.9L401.2 489.6L405.4 497.4L405.4 509.9M473.1 501.6L476.2 487.0L476.2 509.9M486.7 506.8L490.8 501.1L490.8 509.9M497.6 509.9L500.7 492.2L504.4 496.4M511.1 505.8L515.8 496.4L519.0 494.8L524.2 498.5L531.5 478.1L535.6 487.5M541.4 473.5L545.5 477.6M552.3 476.1L555.4 469.3L558.5 484.4L562.2 472.4L562.2 509.9M569.5 473.5L569.5 509.9M576.2 492.7L580.4 480.8L586.7 467.2M592.9 487.5L595.0 484.9M595.0 484.4L598.1 481.8L603.3 487.0L606.5 478.1L606.5 509.9M613.8 509.9L613.8 471.9L617.4 494.3L617.4 509.9M623.6 509.9L623.6 497.4L627.3 481.3L630.9 484.4L630.9 509.9M637.2 509.9L640.3 474.0L644.5 493.2L647.6 486.0L651.2 501.6L654.4 481.8L658.0 491.2L658.5 509.9M664.3 509.9L664.3 493.2L668.4 497.9L672.1 492.2L672.1 509.9M678.3 509.9L678.3 487.5L681.5 492.2M688.2 495.3L695.5 472.9M702.3 509.9L702.3 481.3M709.6 509.9L709.6 485.4L712.7 485.4L716.4 467.2L719.5 475.5L719.5 509.9M726.2 509.9L726.2 494.3M733.0 483.4L736.1 509.9M743.4 509.9L743.4 469.8L746.6 489.6L750.7 481.8M763.2 481.3L767.4 481.3L767.4 509.9M774.2 509.9L774.2 483.4M784.1 493.2L787.2 477.6L791.4 488.0L791.4 509.9M798.1 509.9L798.1 481.3L801.2 509.9L808.5 485.4L811.7 501.6L811.7 509.9M863.2 485.4L866.4 496.4M897.6 498.5L900.7 487.0L904.9 489.6M917.4 489.6L917.4 509.9M934.1 504.2L934.1 509.9M975.2 509.9L975.2 486.0M982.5 509.9L986.5 483.9L986.5 509.9M992.4 509.9L992.4 491.2M1040.3 509.9L1040.3 497.9M1047.1 509.9L1047.1 504.7M1064.3 505.8L1068.4 493.2L1071.6 490.1L1074.7 481.3L1078.9 501.6" stroke="#00ff00"/>
<path d="M107.5 501.6L110.6 501.1L114.8 507.3M121.0 504.2L123.6 508.9M133.5 508.9L135.6 497.9L137.7 495.3L140.8 492.2L142.9 487.0L146.0 493.8M152.3 490.6L155.4 482.8L159.6 492.2L162.7 483.9L166.9 490.6L169.5 481.3L171.0 486.5M183.5 487.0L185.6 483.9L188.8 487.0L193.4 489.6M200.2 485.4L203.3 490.6L207.5 487.0L210.6 480.8L216.9 480.2L220.0 487.0M220.0 488.6L224.7 485.4M228.3 481.8L232.5 483.4L236.7 483.9L237.7 490.1M247.1 484.4L251.2 490.1L254.4 484.4L257.5 483.4L261.7 485.4M272.1 483.9L278.3 491.7L282.5 488.6L288.8 481.8L291.9 488.0L295.0 488.0L299.2 489.1L302.3 481.3L306.5 491.7L309.6 490.1L312.7 486.0L316.4 477.6L320.0 485.4L324.2 489.6L326.2 486.5L330.4 494.3L333.5 490.1M342.9 485.4L345.0 487.5M345.0 487.5L347.6 490.1L351.2 486.5M364.8 491.2L367.4 484.4L371.6 501.1L374.7 495.3L377.8 506.3L384.1 491.2L390.8 504.2L394.0 495.3L398.1 497.4L401.8 508.4L408.5 486.5L412.7 508.4L416.4 495.3L420.0 496.9L424.2 505.8L426.2 509.9M427.3 509.9L429.9 497.9M449.2 507.8L450.2 509.9M461.7 509.9L463.8 500.5L466.9 503.1L470.0 503.1M470.0 503.1L474.2 506.3L480.4 496.4L483.5 507.8L484.6 509.9M485.6 509.9L488.2 506.3M493.4 502.6L494.0 509.9M500.2 502.1L500.2 509.9M507.0 496.4L511.7 496.4L516.9 501.1L521.0 491.7L524.7 500.5M531.5 486.5L534.6 487.0L538.8 494.8L541.9 491.2L545.5 478.1L548.6 488.6L552.3 487.0L555.4 478.1L558.5 484.4L562.7 490.1L565.8 485.4L569.0 484.4L576.2 484.4M582.5 485.4L586.7 487.0L590.8 484.9L595.0 483.4M603.3 475.0L612.7 487.5L616.9 487.5L620.5 484.4M627.8 481.3L630.4 480.2L634.6 493.8L637.7 484.9L640.3 496.4L644.0 494.3L648.1 496.4L654.4 490.1L658.5 499.5L661.7 495.3L664.8 502.1L668.4 489.1L671.0 508.4L675.7 478.7L678.9 496.4L681.5 480.2L688.2 506.8L695.5 483.4M703.3 495.3L705.4 493.2L710.1 507.8L712.7 492.2L716.4 489.1M722.1 502.1L725.2 496.9L729.4 507.3L733.5 495.3L736.7 508.4L740.8 495.3M746.6 497.4L750.2 488.6L754.9 508.4L757.5 498.5M763.2 499.5L767.4 480.2L771.0 492.2L776.2 492.7L781.5 495.3L784.6 484.4L787.7 496.4L794.5 478.1L799.2 491.7M804.4 488.6L808.5 480.2L811.7 489.6M817.9 501.1L822.6 503.7M836.1 509.9L839.8 500.5M859.1 489.6L863.2 491.7L863.2 509.9M893.4 503.1L895.0 509.9M902.8 509.9L904.4 506.3L905.9 509.9M924.2 502.1L924.2 509.9M962.2 504.2L966.9 506.3L970.0 508.9M970.0 504.7L972.1 501.6L975.7 489.6L979.9 492.7M1000.2 509.9L1003.3 496.4L1005.9 509.9M1008.5 509.9L1009.6 506.8L1013.8 505.2L1016.4 500.5L1019.0 509.9M1027.3 509.9L1027.3 494.8L1030.4 509.9L1033.5 492.7L1035.6 509.9M1044.5 502.1L1047.6 502.1L1050.7 509.9L1054.4 495.3L1057.5 489.6L1061.7 499.5" stroke="#0000ff"/>
<path d="M95.5 495.8L97.2 493.0L98.9 492.6L100.6 492.2L102.3 492.7L104.0 492.7L105.7 493.5L107.4 494.3L109.1 491.4L110.8 492.3L112.5 491.7L114.2 491.9L115.9 491.9L117.6 492.9L119.3 493.2L121.0 496.1L122.7 496.7L124.4 496.6L126.1 496.8L127.8 496.1L129.5 496.6L131.2 493.3L132.9 489.2L134.6 489.2L136.3 489.0L138.0 488.3L139.7 487.9L141.4 489.7L143.1 491.3L144.8 487.4L146.5 482.6L148.2 482.4L149.9 483.1L151.6 482.1L153.3 482.8L155.0 481.0L156.7 480.7L158.4 481.4L160.1 482.9L161.8 482.3L163.5 484.2L165.2 483.4L166.9 484.4L168.6 484.0L170.3 484.5L172.0 485.1L173.7 484.9L175.4 483.3L177.1 483.2L178.8 482.7L180.5 483.6L182.2 484.6L183.9 485.1L185.6 485.4L187.3 485.0L189.0 484.2L190.7 484.5L192.4 485.2L194.1 486.2L195.8 486.9L197.5 485.8L199.2 484.1L200.9 485.2L202.6 484.5L204.3 483.0L206.0 483.9L207.7 482.0L209.4 482.3L211.1 480.2L212.8 481.6L214.5 481.3L216.2 482.0L217.9 480.9L219.6 483.2L221.3 484.0L223.0 482.3L224.7 482.1L226.4 482.4L228.1 481.2L229.8 481.4L231.5 481.7L233.2 482.7L234.9 483.7L236.6 483.8L238.3 483.9L240.0 482.6L241.7 482.5L243.4 483.2L245.1 482.2L246.8 482.2L248.5 482.5L250.2 483.8L251.9 484.5L253.6 483.8L255.3 482.7L257.0 482.9L258.7 484.0L260.4 484.6L262.1 484.0L263.8 485.0L265.5 484.8L267.2 486.3L268.9 486.4L270.6 485.1L272.3 484.9L274.0 483.9L275.7 484.7L277.4 484.1L279.1 483.9L280.8 482.4L282.5 482.2L284.2 481.8L285.9 480.5L287.6 481.5L289.3 481.6L291.0 483.7L292.7 486.1L294.4 485.1L296.1 484.3L297.8 485.1L299.5 485.7L301.2 485.2L302.9 484.7L304.6 485.7L306.3 485.4L308.0 485.3L309.7 484.7L311.4 483.8L313.1 484.0L314.8 485.0L316.5 484.8L318.2 484.8L319.9 483.8L321.6 483.5L323.3 483.6L325.0 483.4L326.7 485.8L328.4 486.2L330.1 484.9L331.8 484.6L333.5 484.8L335.2 484.8L336.9 484.9L338.6 486.0L340.3 486.0L342.0 485.2L343.7 485.3L345.4 485.4L347.1 484.6L348.8 485.6L350.5 485.5L352.2 486.0L353.9 485.1L355.6 486.3L357.3 485.4L359.0 484.7L360.7 484.5L362.4 486.6L364.1 487.0L365.8 488.0L367.5 488.3L369.2 489.3L370.9 490.4L372.6 492.3L374.3 491.0L376.0 491.1L377.7 492.1L379.4 493.6L381.1 493.1L382.8 492.3L384.5 493.1L386.2 493.2L387.9 496.4L389.6 494.6L391.3 490.8L393.0 490.7L394.7 492.2L396.4 492.5L398.1 494.3L399.8 495.5L401.5 495.0L403.2 495.5L404.9 494.3L406.6 494.0L408.3 494.4L410.0 497.1L411.7 495.9L413.4 494.6L415.1 495.5L416.8 494.9L418.5 501.6L420.2 502.8L421.9 497.3L423.6 495.4L425.3 492.6L427.0 493.0L428.7 493.6L430.4 492.2L432.1 498.3L433.8 498.7L435.5 495.7L437.2 496.0L438.9 497.2L440.6 496.3L442.3 494.4L444.0 493.7L445.7 496.6L447.4 497.8L449.1 497.3L450.8 497.2L452.5 498.7L454.2 500.3L455.9 497.7L457.6 493.2L459.3 494.1L461.0 495.1L462.7 494.5L464.4 494.4L466.1 495.2L467.8 494.9L469.5 495.3L471.2 494.0L472.9 494.0L474.6 492.5L476.3 493.4L478.0 494.0L479.7 494.2L481.4 493.5L483.1 494.9L484.8 493.8L486.5 494.6L488.2 496.7L489.9 495.7L491.6 495.9L493.3 496.5L495.0 495.0L496.7 495.0L498.4 492.7L500.1 493.6L501.8 492.8L503.5 493.5L505.2 493.8L506.9 494.0L508.6 493.8L510.3 493.4L512.0 491.4L513.7 493.0L515.4 492.8L517.1 492.1L518.8 493.9L520.5 490.8L522.2 486.7L523.9 486.6L525.6 486.5L527.3 487.2L529.0 487.5L530.7 487.8L532.4 486.5L534.1 485.9L535.8 484.4L537.5 482.3L539.2 482.1L540.9 481.6L542.6 482.7L544.3 483.4L546.0 483.4L547.7 483.1L549.4 482.4L551.1 482.5L552.8 482.6L554.5 482.4L556.2 483.4L557.9 483.5L559.6 484.9L561.3 486.0L563.0 487.5L564.7 486.3L566.4 487.0L568.1 486.2L569.8 486.2L571.5 487.4L573.2 488.0L574.9 488.4L576.6 489.8L578.3 489.5L580.0 488.6L581.7 487.8L583.4 486.1L585.1 487.9L586.8 487.4L588.5 488.7L590.2 488.5L591.9 488.1L593.6 487.7L595.3 486.6L597.0 486.3L598.7 486.4L600.4 487.2L602.1 489.6L603.8 487.9L605.5 487.6L607.2 489.3L608.9 489.1L610.6 490.3L612.3 488.5L614.0 488.8L615.7 489.7L617.4 489.4L619.1 490.7L620.8 490.3L622.5 490.5L624.2 489.8L625.9 490.0L627.6 489.9L629.3 491.0L631.0 491.2L632.7 492.0L634.4 491.3L636.1 491.9L637.8 492.2L639.5 490.9L641.2 491.3L642.9 492.7L644.6 491.6L646.3 492.2L648.0 491.7L649.7 490.6L651.4 490.4L653.1 491.9L654.8 492.2L656.5 491.9L658.2 492.7L659.9 493.5L661.6 491.6L663.3 492.2L665.0 491.5L666.7 492.4L668.4 492.4L670.1 492.8L671.8 492.6L673.5 491.4L675.2 489.8L676.9 490.6L678.6 490.7L680.3 491.5L682.0 491.9L683.7 492.8L685.4 490.2L687.1 490.9L688.8 490.7L690.5 492.2L692.2 490.7L693.9 490.4L695.6 491.0L697.3 492.1L699.0 491.8L700.7 492.9L702.4 491.5L704.1 492.2L705.8 491.4L707.5 490.5L709.2 491.8L710.9 492.1L712.6 492.3L714.3 492.0L716.0 490.5L717.7 491.6L719.4 491.9L721.1 494.0L722.8 494.7L724.5 492.7L726.2 492.0L727.9 492.1L729.6 491.9L731.3 493.2L733.0 493.5L734.7 492.6L736.4 493.2L738.1 492.5L739.8 491.8L741.5 490.2L743.2 488.9L744.9 490.9L746.6 490.9L748.3 493.6L750.0 493.2L751.7 493.1L753.4 491.5L755.1 491.7L756.8 490.4L758.5 490.2L760.2 492.3L761.9 493.0L763.6 495.4L765.3 492.3L767.0 491.8L768.7 492.5L770.4 492.2L772.1 492.8L773.8 491.5L775.5 491.8L777.2 492.2L778.9 492.7L780.6 492.6L782.3 492.6L784.0 493.5L785.7 494.5L787.4 495.6L789.1 494.2L790.8 493.2L792.5 492.7L794.2 493.7L795.9 492.3L797.6 493.5L799.3 493.1L801.0 494.1L802.7 494.2L804.4 494.9L806.1 495.8L807.8 494.2L809.5 492.9L811.2 492.8L812.9 494.4L814.6 498.9L816.3 500.0L818.0 497.2L819.7 496.2L821.4 497.5L823.1 498.5L824.8 498.4L826.5 497.7L828.2 498.4L829.9 497.9L831.6 497.4L833.3 498.8L835.0 498.5L836.7 495.2L838.4 496.8L840.1 497.2L841.8 498.6L843.5 497.4L845.2 499.5L846.9 496.3L848.6 498.8L850.3 497.9L852.0 497.1L853.7 499.3L855.4 496.0L857.1 498.8L858.8 494.3L860.5 492.6L862.2 495.5L863.9 495.7L865.6 495.7L867.3 498.8L869.0 497.0L870.7 496.9L872.4 498.9L874.1 495.7L875.8 498.0L877.5 496.6L879.2 498.5L880.9 499.6L882.6 496.3L884.3 500.2L886.0 496.9L887.7 496.8L889.4 499.0L891.1 496.7L892.8 496.1L894.5 495.5L896.2 495.7L897.9 497.1L899.6 497.9L901.3 496.0L903.0 497.8L904.7 495.8L906.4 497.3L908.1 498.7L909.8 497.6L911.5 496.3L913.2 496.4L914.9 497.4L916.6 496.4L918.3 495.8L920.0 498.1L921.7 499.8L923.4 498.1L925.1 495.3L926.8 494.6L928.5 498.4L930.2 497.7L931.9 498.3L933.6 498.4L935.3 497.1L937.0 496.4L938.7 494.7L940.4 497.7L942.1 497.2L943.8 496.8L945.5 498.5L947.2 497.4L948.9 498.6L950.6 496.8L952.3 495.4L954.0 498.5L955.7 497.4L957.4 496.1L959.1 494.2L960.8 493.6L962.5 497.5L964.2 498.7L965.9 494.5L967.6 494.8L969.3 496.1L971.0 497.1L972.7 496.1L974.4 491.4L976.1 495.8L977.8 494.6L979.5 495.1L981.2 496.5L982.9 495.8L984.6 494.6L986.3 498.0L988.0 495.4L989.7 496.9L991.4 498.0L993.1 497.3L994.8 502.3L996.5 498.8L998.2 498.1L999.9 497.0L1001.6 496.9L1003.3 497.7L1005.0 498.7L1006.7 497.6L1008.4 496.2L1010.1 497.4L1011.8 493.2L1013.5 491.7L1015.2 495.7L1016.9 498.8L1018.6 498.2L1020.3 499.6L1022.0 500.5L1023.7 503.0L1025.4 497.7L1027.1 496.0L1028.8 498.6L1030.5 495.4L1032.2 494.6L1033.9 496.9L1035.6 498.0L1037.3 496.0L1039.0 494.8L1040.7 494.5L1042.4 495.9L1044.1 495.5L1045.8 494.2L1047.5 494.6L1049.2 497.4L1050.9 498.3L1052.6 493.8L1054.3 491.7L1056.0 493.7L1057.7 494.2L1059.4 495.3L1061.1 493.9L1062.8 492.6L1064.5 493.1L1066.2 493.0L1067.9 493.4L1069.6 493.8L1071.3 492.7L1073.0 492.7L1074.7 494.1L1076.4 493.1L1078.1 494.1L1079.8 494.5" stroke="#ff0000"/>
</g>
<path d="M108.7 180.8h3.4v6.0h-3.4zM149.8 156.4h3.4v6.0h-3.4zM153.2 113.7h3.4v6.0h-3.4zM160.0 162.5h3.4v6.0h-3.4zM177.2 168.6h3.4v6.0h-3.4zM184.0 174.7h3.4v6.0h-3.4zM194.3 150.3h3.4v6.0h-3.4zM197.7 180.8h3.4v6.0h-3.4zM197.7 150.3h3.4v6.0h-3.4zM201.1 186.9h3.4v6.0h-3.4zM208.0 186.9h3.4v6.0h-3.4zM211.4 193.0h3.4v6.0h-3.4zM214.8 113.7h3.4v6.0h-3.4zM225.1 193.0h3.4v6.0h-3.4zM225.1 156.4h3.4v6.0h-3.4zM235.4 193.0h3.4v6.0h-3.4zM242.2 125.9h3.4v6.0h-3.4zM276.5 174.7h3.4v6.0h-3.4zM283.3 162.5h3.4v6.0h-3.4zM290.1 174.7h3.4v6.0h-3.4zM314.1 186.9h3.4v6.0h-3.4zM341.5 186.9h3.4v6.0h-3.4zM362.0 144.2h3.4v6.0h-3.4zM365.5 186.9h3.4v6.0h-3.4zM372.3 107.6h3.4v6.0h-3.4zM382.6 180.8h3.4v6.0h-3.4zM382.6 132.0h3.4v6.0h-3.4zM382.6 119.8h3.4v6.0h-3.4zM386.0 119.8h3.4v6.0h-3.4zM392.9 138.1h3.4v6.0h-3.4zM396.3 174.7h3.4v6.0h-3.4zM396.3 113.7h3.4v6.0h-3.4zM403.1 138.1h3.4v6.0h-3.4zM533.2 199.1h3.4v6.0h-3.4zM536.6 174.7h3.4v6.0h-3.4zM543.5 193.0h3.4v6.0h-3.4zM577.7 125.9h3.4v6.0h-3.4zM588.0 199.1h3.4v6.0h-3.4zM608.5 180.8h3.4v6.0h-3.4zM612.0 186.9h3.4v6.0h-3.4zM622.2 174.7h3.4v6.0h-3.4zM629.1 150.3h3.4v6.0h-3.4zM632.5 107.6h3.4v6.0h-3.4zM646.2 199.1h3.4v6.0h-3.4zM868.7 186.9h3.4v6.0h-3.4zM916.7 193.0h3.4v6.0h-3.4zM940.6 193.0h3.4v6.0h-3.4zM1002.3 186.9h3.4v6.0h-3.4zM1005.7 193.0h3.4v6.0h-3.4zM1016.0 193.0h3.4v6.0h-3.4zM1046.8 199.1h3.4v6.0h-3.4z" fill="#0e0fae"/>
<path d="M112.1 199.1h3.4v6.0h-3.4zM166.9 199.1h3.4v6.0h-3.4zM166.9 186.9h3.4v6.0h-3.4zM269.6 193.0h3.4v6.0h-3.4zM273.0 186.9h3.4v6.0h-3.4zM321.0 193.0h3.4v6.0h-3.4zM533.2 193.0h3.4v6.0h-3.4zM543.5 186.9h3.4v6.0h-3.4zM550.3 193.0h3.4v6.0h-3.4zM560.6 193.0h3.4v6.0h-3.4zM567.5 193.0h3.4v6.0h-3.4zM574.3 186.9h3.4v6.0h-3.4zM594.8 199.1h3.4v6.0h-3.4zM601.7 180.8h3.4v6.0h-3.4zM653.0 186.9h3.4v6.0h-3.4zM656.5 199.1h3.4v6.0h-3.4zM697.6 199.1h3.4v6.0h-3.4zM711.2 193.0h3.4v6.0h-3.4zM752.3 199.1h3.4v6.0h-3.4zM783.1 199.1h3.4v6.0h-3.4zM896.1 180.8h3.4v6.0h-3.4zM937.2 199.1h3.4v6.0h-3.4zM998.8 193.0h3.4v6.0h-3.4z" fill="#1215c5"/>
<path d="M115.5 193.0h3.4v6.0h-3.4zM149.8 180.8h3.4v6.0h-3.4zM163.5 193.0h3.4v6.0h-3.4zM163.5 186.9h3.4v6.0h-3.4zM204.6 193.0h3.4v6.0h-3.4zM235.4 180.8h3.4v6.0h-3.4zM252.5 205.2h3.4v6.0h-3.4zM283.3 180.8h3.4v6.0h-3.4zM297.0 186.9h3.4v6.0h-3.4zM307.3 193.0h3.4v6.0h-3.4zM348.3 199.1h3.4v6.0h-3.4zM358.6 205.2h3.4v6.0h-3.4zM392.9 193.0h3.4v6.0h-3.4zM430.5 186.9h3.4v6.0h-3.4zM523.0 186.9h3.4v6.0h-3.4zM526.4 186.9h3.4v6.0h-3.4zM540.1 205.2h3.4v6.0h-3.4zM546.9 199.1h3.4v6.0h-3.4zM546.9 186.9h3.4v6.0h-3.4zM584.6 205.2h3.4v6.0h-3.4zM584.6 180.8h3.4v6.0h-3.4zM588.0 186.9h3.4v6.0h-3.4zM605.1 180.8h3.4v6.0h-3.4zM612.0 199.1h3.4v6.0h-3.4zM622.2 193.0h3.4v6.0h-3.4zM635.9 180.8h3.4v6.0h-3.4zM649.6 205.2h3.4v6.0h-3.4zM728.4 205.2h3.4v6.0h-3.4zM731.8 193.0h3.4v6.0h-3.4zM742.1 193.0h3.4v6.0h-3.4zM800.3 205.2h3.4v6.0h-3.4zM841.3 186.9h3.4v6.0h-3.4zM1009.1 205.2h3.4v6.0h-3.4zM1050.2 186.9h3.4v6.0h-3.4zM1053.6 193.0h3.4v6.0h-3.4z" fill="#1365fe"/>
<path d="M129.2 186.9h3.4v6.0h-3.4zM160.0 193.0h3.4v6.0h-3.4zM170.3 180.8h3.4v6.0h-3.4zM184.0 150.3h3.4v6.0h-3.4zM187.4 199.1h3.4v6.0h-3.4zM204.6 180.8h3.4v6.0h-3.4zM204.6 168.6h3.4v6.0h-3.4zM218.2 193.0h3.4v6.0h-3.4zM218.2 180.8h3.4v6.0h-3.4zM228.5 168.6h3.4v6.0h-3.4zM242.2 113.7h3.4v6.0h-3.4zM245.6 156.4h3.4v6.0h-3.4zM269.6 144.2h3.4v6.0h-3.4zM279.9 193.0h3.4v6.0h-3.4zM283.3 156.4h3.4v6.0h-3.4zM297.0 199.1h3.4v6.0h-3.4zM297.0 156.4h3.4v6.0h-3.4zM321.0 150.3h3.4v6.0h-3.4zM338.1 199.1h3.4v6.0h-3.4zM365.5 132.0h3.4v6.0h-3.4zM375.7 138.1h3.4v6.0h-3.4zM399.7 180.8h3.4v6.0h-3.4zM406.5 180.8h3.4v6.0h-3.4zM413.4 186.9h3.4v6.0h-3.4zM427.1 199.1h3.4v6.0h-3.4zM529.8 150.3h3.4v6.0h-3.4zM540.1 150.3h3.4v6.0h-3.4zM550.3 180.8h3.4v6.0h-3.4zM557.2 180.8h3.4v6.0h-3.4zM560.6 186.9h3.4v6.0h-3.4zM567.5 150.3h3.4v6.0h-3.4zM574.3 199.1h3.4v6.0h-3.4zM577.7 156.4h3.4v6.0h-3.4zM584.6 150.3h3.4v6.0h-3.4zM605.1 199.1h3.4v6.0h-3.4zM605.1 162.5h3.4v6.0h-3.4zM605.1 83.2h3.4v6.0h-3.4zM608.5 199.1h3.4v6.0h-3.4zM608.5 113.7h3.4v6.0h-3.4zM625.7 186.9h3.4v6.0h-3.4zM629.1 156.4h3.4v6.0h-3.4zM635.9 199.1h3.4v6.0h-3.4zM639.4 199.1h3.4v6.0h-3.4zM639.4 150.3h3.4v6.0h-3.4zM646.2 186.9h3.4v6.0h-3.4zM646.2 180.8h3.4v6.0h-3.4zM701.0 193.0h3.4v6.0h-3.4zM721.5 199.1h3.4v6.0h-3.4zM742.1 199.1h3.4v6.0h-3.4zM745.5 150.3h3.4v6.0h-3.4zM783.1 186.9h3.4v6.0h-3.4zM933.8 193.0h3.4v6.0h-3.4z" fill="#181ce9"/>
<path d="M139.5 205.2h3.4v6.0h-3.4zM166.9 205.2h3.4v6.0h-3.4zM249.1 205.2h3.4v6.0h-3.4zM273.0 205.2h3.4v6.0h-3.4zM314.1 205.2h3.4v6.0h-3.4zM389.4 205.2h3.4v6.0h-3.4zM423.7 205.2h3.4v6.0h-3.4zM564.0 205.2h3.4v6.0h-3.4zM625.7 205.2h3.4v6.0h-3.4zM687.3 205.2h3.4v6.0h-3.4zM803.7 205.2h3.4v6.0h-3.4zM1063.9 205.2h3.4v6.0h-3.4z" fill="#1559fd"/>
<path d="M142.9 205.2h3.4v6.0h-3.4zM228.5 205.2h3.4v6.0h-3.4zM362.0 205.2h3.4v6.0h-3.4zM403.1 205.2h3.4v6.0h-3.4zM413.4 205.2h3.4v6.0h-3.4zM622.2 205.2h3.4v6.0h-3.4zM629.1 205.2h3.4v6.0h-3.4zM680.4 205.2h3.4v6.0h-3.4zM697.6 205.2h3.4v6.0h-3.4zM704.4 205.2h3.4v6.0h-3.4z" fill="#008dca"/>
<path d="M142.9 156.4h3.4v6.0h-3.4zM173.7 168.6h3.4v6.0h-3.4zM173.7 138.1h3.4v6.0h-3.4zM184.0 144.2h3.4v6.0h-3.4zM221.7 174.7h3.4v6.0h-3.4zM221.7 150.3h3.4v6.0h-3.4zM249.1 150.3h3.4v6.0h-3.4zM252.5 150.3h3.4v6.0h-3.4zM273.0 174.7h3.4v6.0h-3.4zM273.0 144.2h3.4v6.0h-3.4zM286.7 168.6h3.4v6.0h-3.4zM338.1 150.3h3.4v6.0h-3.4zM362.0 162.5h3.4v6.0h-3.4zM392.9 113.7h3.4v6.0h-3.4zM396.3 168.6h3.4v6.0h-3.4zM406.5 144.2h3.4v6.0h-3.4zM413.4 156.4h3.4v6.0h-3.4zM413.4 113.7h3.4v6.0h-3.4zM420.2 132.0h3.4v6.0h-3.4zM550.3 174.7h3.4v6.0h-3.4zM560.6 150.3h3.4v6.0h-3.4zM567.5 156.4h3.4v6.0h-3.4zM567.5 95.4h3.4v6.0h-3.4zM574.3 125.9h3.4v6.0h-3.4zM594.8 162.5h3.4v6.0h-3.4zM632.5 174.7h3.4v6.0h-3.4zM632.5 113.7h3.4v6.0h-3.4zM738.6 162.5h3.4v6.0h-3.4zM824.2 156.4h3.4v6.0h-3.4z" fill="#0c0da2"/>
<path d="M146.4 132.0h3.4v6.0h-3.4zM160.0 156.4h3.4v6.0h-3.4zM177.2 125.9h3.4v6.0h-3.4zM180.6 162.5h3.4v6.0h-3.4zM184.0 119.8h3.4v6.0h-3.4zM190.9 113.7h3.4v6.0h-3.4zM201.1 162.5h3.4v6.0h-3.4zM214.8 119.8h3.4v6.0h-3.4zM221.7 162.5h3.4v6.0h-3.4zM255.9 113.7h3.4v6.0h-3.4zM262.8 162.5h3.4v6.0h-3.4zM266.2 168.6h3.4v6.0h-3.4zM266.2 162.5h3.4v6.0h-3.4zM273.0 168.6h3.4v6.0h-3.4zM297.0 168.6h3.4v6.0h-3.4zM375.7 150.3h3.4v6.0h-3.4zM396.3 125.9h3.4v6.0h-3.4zM413.4 125.9h3.4v6.0h-3.4zM481.9 132.0h3.4v6.0h-3.4zM533.2 174.7h3.4v6.0h-3.4zM546.9 150.3h3.4v6.0h-3.4zM581.2 150.3h3.4v6.0h-3.4zM608.5 125.9h3.4v6.0h-3.4zM618.8 138.1h3.4v6.0h-3.4zM629.1 174.7h3.4v6.0h-3.4zM639.4 174.7h3.4v6.0h-3.4zM701.0 162.5h3.4v6.0h-3.4z" fill="#08088a"/>
<path d="M156.6 211.3h3.4v7.5h-3.4zM362.0 211.3h3.4v7.5h-3.4zM605.1 211.3h3.4v7.5h-3.4zM629.1 211.3h3.4v7.5h-3.4zM666.7 211.3h3.4v7.5h-3.4zM783.1 211.3h3.4v7.5h-3.4z" fill="#0090bf"/>
<path d="M163.5 199.1h3.4v6.0h-3.4zM173.7 180.8h3.4v6.0h-3.4zM190.9 193.0h3.4v6.0h-3.4zM197.7 186.9h3.4v6.0h-3.4zM225.1 199.1h3.4v6.0h-3.4zM242.2 180.8h3.4v6.0h-3.4zM276.5 193.0h3.4v6.0h-3.4zM286.7 199.1h3.4v6.0h-3.4zM290.1 186.9h3.4v6.0h-3.4zM300.4 199.1h3.4v6.0h-3.4zM303.8 193.0h3.4v6.0h-3.4zM317.5 180.8h3.4v6.0h-3.4zM334.7 199.1h3.4v6.0h-3.4zM365.5 193.0h3.4v6.0h-3.4zM368.9 199.1h3.4v6.0h-3.4zM379.2 193.0h3.4v6.0h-3.4zM389.4 193.0h3.4v6.0h-3.4zM396.3 186.9h3.4v6.0h-3.4zM403.1 199.1h3.4v6.0h-3.4zM437.4 186.9h3.4v6.0h-3.4zM444.2 199.1h3.4v6.0h-3.4zM533.2 180.8h3.4v6.0h-3.4zM540.1 193.0h3.4v6.0h-3.4zM570.9 186.9h3.4v6.0h-3.4zM618.8 186.9h3.4v6.0h-3.4zM635.9 193.0h3.4v6.0h-3.4zM639.4 180.8h3.4v6.0h-3.4zM670.2 193.0h3.4v6.0h-3.4zM738.6 186.9h3.4v6.0h-3.4zM762.6 193.0h3.4v6.0h-3.4zM824.2 180.8h3.4v6.0h-3.4zM889.3 193.0h3.4v6.0h-3.4zM978.3 186.9h3.4v6.0h-3.4z" fill="#164cfa"/>
<path d="M166.9 211.3h3.4v7.5h-3.4zM218.2 205.2h3.4v6.0h-3.4zM221.7 211.3h3.4v7.5h-3.4zM303.8 205.2h3.4v6.0h-3.4zM310.7 211.3h3.4v7.5h-3.4zM348.3 205.2h3.4v6.0h-3.4zM382.6 205.2h3.4v6.0h-3.4zM574.3 205.2h3.4v6.0h-3.4zM598.3 211.3h3.4v7.5h-3.4zM646.2 211.3h3.4v7.5h-3.4zM810.5 211.3h3.4v7.5h-3.4zM817.4 205.2h3.4v6.0h-3.4zM957.8 205.2h3.4v6.0h-3.4zM1043.3 205.2h3.4v6.0h-3.4z" fill="#0c74eb"/>
<path d="M166.9 162.5h3.4v6.0h-3.4zM166.9 132.0h3.4v6.0h-3.4zM194.3 138.1h3.4v6.0h-3.4zM201.1 144.2h3.4v6.0h-3.4zM221.7 138.1h3.4v6.0h-3.4zM252.5 138.1h3.4v6.0h-3.4zM273.0 125.9h3.4v6.0h-3.4zM297.0 174.7h3.4v6.0h-3.4zM317.5 132.0h3.4v6.0h-3.4zM324.4 168.6h3.4v6.0h-3.4zM348.3 168.6h3.4v6.0h-3.4zM362.0 150.3h3.4v6.0h-3.4zM375.7 125.9h3.4v6.0h-3.4zM379.2 119.8h3.4v6.0h-3.4zM437.4 156.4h3.4v6.0h-3.4zM526.4 119.8h3.4v6.0h-3.4zM536.6 119.8h3.4v6.0h-3.4zM543.5 162.5h3.4v6.0h-3.4zM546.9 168.6h3.4v6.0h-3.4zM557.2 119.8h3.4v6.0h-3.4zM560.6 162.5h3.4v6.0h-3.4zM608.5 107.6h3.4v6.0h-3.4zM618.8 162.5h3.4v6.0h-3.4zM639.4 168.6h3.4v6.0h-3.4zM680.4 174.7h3.4v6.0h-3.4zM731.8 162.5h3.4v6.0h-3.4z" fill="#1417d1"/>
<path d="M170.3 205.2h3.4v6.0h-3.4zM194.3 199.1h3.4v6.0h-3.4zM201.1 193.0h3.4v6.0h-3.4zM231.9 193.0h3.4v6.0h-3.4zM242.2 193.0h3.4v6.0h-3.4zM242.2 186.9h3.4v6.0h-3.4zM317.5 205.2h3.4v6.0h-3.4zM321.0 186.9h3.4v6.0h-3.4zM327.8 193.0h3.4v6.0h-3.4zM327.8 180.8h3.4v6.0h-3.4zM341.5 193.0h3.4v6.0h-3.4zM348.3 180.8h3.4v6.0h-3.4zM355.2 199.1h3.4v6.0h-3.4zM355.2 180.8h3.4v6.0h-3.4zM523.0 205.2h3.4v6.0h-3.4zM523.0 193.0h3.4v6.0h-3.4zM529.8 193.0h3.4v6.0h-3.4zM570.9 199.1h3.4v6.0h-3.4zM581.2 205.2h3.4v6.0h-3.4zM591.4 193.0h3.4v6.0h-3.4zM594.8 193.0h3.4v6.0h-3.4zM598.3 180.8h3.4v6.0h-3.4zM615.4 186.9h3.4v6.0h-3.4zM629.1 180.8h3.4v6.0h-3.4zM632.5 193.0h3.4v6.0h-3.4zM635.9 186.9h3.4v6.0h-3.4zM721.5 186.9h3.4v6.0h-3.4zM820.8 205.2h3.4v6.0h-3.4zM882.4 205.2h3.4v6.0h-3.4zM889.3 199.1h3.4v6.0h-3.4zM1026.2 193.0h3.4v6.0h-3.4z" fill="#1831f4"/>
<path d="M170.3 199.1h3.4v6.0h-3.4zM231.9 180.8h3.4v6.0h-3.4zM266.2 199.1h3.4v6.0h-3.4zM303.8 199.1h3.4v6.0h-3.4zM368.9 193.0h3.4v6.0h-3.4zM420.2 180.8h3.4v6.0h-3.4zM433.9 180.8h3.4v6.0h-3.4zM437.4 180.8h3.4v6.0h-3.4zM557.2 193.0h3.4v6.0h-3.4zM564.0 186.9h3.4v6.0h-3.4zM598.3 199.1h3.4v6.0h-3.4zM612.0 193.0h3.4v6.0h-3.4zM639.4 193.0h3.4v6.0h-3.4zM663.3 199.1h3.4v6.0h-3.4zM793.4 193.0h3.4v6.0h-3.4zM814.0 193.0h3.4v6.0h-3.4zM896.1 199.1h3.4v6.0h-3.4zM909.8 186.9h3.4v6.0h-3.4z" fill="#161add"/>
<path d="M173.7 150.3h3.4v6.0h-3.4zM214.8 156.4h3.4v6.0h-3.4zM214.8 125.9h3.4v6.0h-3.4zM225.1 150.3h3.4v6.0h-3.4zM225.1 132.0h3.4v6.0h-3.4zM235.4 113.7h3.4v6.0h-3.4zM245.6 119.8h3.4v6.0h-3.4zM255.9 125.9h3.4v6.0h-3.4zM259.3 168.6h3.4v6.0h-3.4zM262.8 125.9h3.4v6.0h-3.4zM293.6 144.2h3.4v6.0h-3.4zM300.4 132.0h3.4v6.0h-3.4zM303.8 138.1h3.4v6.0h-3.4zM317.5 113.7h3.4v6.0h-3.4zM327.8 113.7h3.4v6.0h-3.4zM379.2 113.7h3.4v6.0h-3.4zM399.7 168.6h3.4v6.0h-3.4zM433.9 144.2h3.4v6.0h-3.4zM437.4 168.6h3.4v6.0h-3.4zM437.4 150.3h3.4v6.0h-3.4zM437.4 119.8h3.4v6.0h-3.4zM574.3 174.7h3.4v6.0h-3.4zM601.7 156.4h3.4v6.0h-3.4zM605.1 113.7h3.4v6.0h-3.4zM629.1 168.6h3.4v6.0h-3.4zM670.2 162.5h3.4v6.0h-3.4zM752.3 156.4h3.4v6.0h-3.4zM827.7 168.6h3.4v6.0h-3.4z" fill="#1012ba"/>
<path d="M187.4 211.3h3.4v7.5h-3.4z" fill="#0096aa"/>
<path d="M197.7 205.2h3.4v6.0h-3.4zM266.2 205.2h3.4v6.0h-3.4zM748.9 205.2h3.4v6.0h-3.4z" fill="#116af7"/>
<path d="M201.1 211.3h3.4v7.5h-3.4zM262.8 211.3h3.4v7.5h-3.4zM540.1 211.3h3.4v7.5h-3.4zM704.4 211.3h3.4v7.5h-3.4zM755.8 211.3h3.4v7.5h-3.4zM759.2 211.3h3.4v7.5h-3.4zM793.4 211.3h3.4v7.5h-3.4z" fill="#0288d1"/>
<path d="M279.9 211.3h3.4v7.5h-3.4zM820.8 211.3h3.4v7.5h-3.4zM824.2 211.3h3.4v7.5h-3.4zM865.3 211.3h3.4v7.5h-3.4z" fill="#08a786"/>
<path d="M317.5 211.3h3.4v7.5h-3.4zM321.0 211.3h3.4v7.5h-3.4zM523.0 211.3h3.4v7.5h-3.4zM577.7 211.3h3.4v7.5h-3.4zM612.0 211.3h3.4v7.5h-3.4zM748.9 211.3h3.4v7.5h-3.4zM1070.7 211.3h3.4v7.5h-3.4z" fill="#009b95"/>
<path d="M145 386h1v5h-1zM197 381h1v5h-1zM564 383h1v3h-1z" fill="#171be2"/>
<path d="M145 392h1v4h-1zM204 377h1v3h-1zM259 392h1v4h-1zM529 377h1v4h-1zM559 377h1v4h-1z" fill="#0c0da2"/>
<path d="M145 398h1v2h-1zM180 397h2v3h-2zM205 377h1v3h-1z" fill="#0d0da5"/>
<path d="M146 381h1v5h-1zM558 386h1v5h-1z" fill="#1417d0"/>
<path d="M146 386h1v5h-1zM243 387h2v4h-2z" fill="#191ef0"/>
<path d="M146 392h1v4h-1zM146 396h1v4h-1zM152 383h2v3h-2zM190 393h1v3h-1zM220 396h1v4h-1zM225 396h2v4h-2zM229 381h1v5h-1zM293 383h1v7h-1zM535 384h1v2h-1z" fill="#0f11b6"/>
<path d="M147 377h1v3h-1zM173 396h1v4h-1zM256 398h1v2h-1z" fill="#09098f"/>
<path d="M147 388h1v3h-1zM149 388h2v3h-2zM165 383h2v3h-2zM175 388h1v3h-1zM188 387h2v4h-2zM260 388h2v3h-2z" fill="#1519da"/>
<path d="M147 393h1v3h-1zM184 383h1v3h-1zM188 383h2v3h-2zM201 382h2v4h-2zM344 383h2v7h-2z" fill="#1012b8"/>
<path d="M147 397h1v3h-1zM284 384h1v6h-1zM288 384h1v6h-1z" fill="#0b0c9d"/>
<path d="M148 383h1v3h-1zM219 387h1v4h-1zM220 383h1v3h-1zM256 388h1v3h-1zM567 382h1v4h-1z" fill="#161ade"/>
<path d="M148 387h1v4h-1zM553 382h1v4h-1z" fill="#1215c9"/>
<path d="M148 393h1v3h-1zM176 398h1v2h-1zM207 392h1v4h-1zM565 393h2v7h-2z" fill="#09098d"/>
<path d="M148 398h1v2h-1zM185 377h1v3h-1zM199 376h1v4h-1zM243 381h2v5h-2zM247 392h1v4h-1zM255 392h1v4h-1zM259 381h1v5h-1zM252 393h2v7h-2zM558 376h1v5h-1z" fill="#1012b9"/>
<path d="M149 375h2v5h-2zM233 393h1v3h-1zM260 396h2v4h-2zM276 393h1v6h-1zM292 393h1v6h-1zM331 383h1v7h-1zM553 394h1v6h-1z" fill="#0c0da3"/>
<path d="M149 394h2v2h-2zM285 382h1v8h-1zM332 384h1v6h-1zM239 392h1v8h-1zM530 386h2v5h-2zM534 392h1v8h-1zM574 392h2v8h-2z" fill="#1114c2"/>
<path d="M149 396h2v4h-2zM245 392h1v4h-1zM334 395h2v4h-2zM564 392h1v8h-1z" fill="#0d0ea7"/>
<path d="M151 383h1v3h-1zM554 392h2v8h-2z" fill="#1013bd"/>
<path d="M151 392h1v4h-1zM215 392h1v4h-1zM279 394h1v5h-1z" fill="#0a0a94"/>
<path d="M151 396h1v4h-1zM237 396h1v4h-1zM317 383h1v7h-1zM255 392h1v8h-1z" fill="#0b0b9a"/>
<path d="M152 388h2v3h-2zM223 382h1v4h-1zM258 382h1v4h-1z" fill="#1519d9"/>
<path d="M154 383h1v3h-1zM230 383h2v3h-2z" fill="#1518d6"/>
<path d="M154 388h1v3h-1zM214 387h1v4h-1zM264 388h1v3h-1zM557 387h1v4h-1z" fill="#191eee"/>
<path d="M154 394h1v2h-1zM190 398h1v2h-1zM201 393h2v3h-2zM238 381h2v5h-2zM242 396h1v4h-1zM297 382h1v8h-1zM309 382h1v8h-1zM538 377h1v4h-1zM541 383h1v3h-1zM548 384h2v2h-2zM556 394h1v6h-1z" fill="#0f10b2"/>
<path d="M155 381h1v5h-1zM238 386h2v5h-2zM560 383h1v3h-1z" fill="#1214c3"/>
<path d="M155 387h1v4h-1zM528 386h1v5h-1z" fill="#181deb"/>
<path d="M155 396h1v4h-1zM204 394h1v2h-1zM216 396h2v4h-2zM236 376h1v4h-1zM207 392h1v8h-1zM218 394h1v6h-1z" fill="#0c0ca1"/>
<path d="M156 375h2v5h-2zM221 375h1v5h-1z" fill="#0a0b99"/>
<path d="M156 381h2v5h-2zM554 386h2v5h-2z" fill="#1316cd"/>
<path d="M156 392h2v4h-2zM311 395h2v4h-2z" fill="#090991"/>
<path d="M156 398h2v2h-2z" fill="#080886"/>
<path d="M158 381h2v5h-2zM259 386h1v5h-1zM542 384h1v2h-1zM565 384h2v2h-2z" fill="#161add"/>
<path d="M160 392h1v4h-1z" fill="#08088b"/>
<path d="M161 393h2v3h-2z" fill="#0c0da4"/>
<path d="M163 388h2v3h-2zM204 388h1v3h-1zM215 387h1v4h-1zM535 387h1v4h-1zM579 386h2v5h-2z" fill="#1417d2"/>
<path d="M163 392h2v4h-2zM247 381h1v5h-1zM534 382h1v4h-1z" fill="#1011b7"/>
<path d="M165 386h2v5h-2zM228 383h1v3h-1zM251 388h2v3h-2z" fill="#1518d7"/>
<path d="M165 396h2v4h-2zM240 397h1v3h-1z" fill="#070784"/>
<path d="M167 388h1v3h-1zM326 382h2v8h-2zM350 384h1v6h-1zM217 392h1v8h-1zM529 393h1v7h-1zM568 392h1v8h-1z" fill="#1012bb"/>
<path d="M167 392h1v4h-1zM544 375h2v6h-2z" fill="#0e0fae"/>
<path d="M168 381h1v5h-1zM198 386h1v5h-1zM236 381h1v5h-1z" fill="#1316cc"/>
<path d="M168 386h1v5h-1zM207 387h1v4h-1zM216 382h2v4h-2zM220 386h1v5h-1zM562 388h1v3h-1z" fill="#161adf"/>
<path d="M168 392h1v4h-1zM227 381h1v5h-1zM248 392h2v4h-2zM540 376h1v5h-1z" fill="#0e10b0"/>
<path d="M169 381h2v5h-2zM246 381h1v5h-1zM247 388h1v3h-1zM256 382h1v4h-1z" fill="#1113c0"/>
<path d="M169 388h2v3h-2zM173 386h1v5h-1zM218 383h1v3h-1zM240 383h1v3h-1zM242 387h1v4h-1z" fill="#171be4"/>
<path d="M171 383h1v3h-1zM205 386h1v5h-1zM206 381h1v5h-1zM253 386h2v5h-2zM550 386h2v5h-2z" fill="#171be1"/>
<path d="M171 387h1v4h-1zM195 382h2v4h-2zM236 387h1v4h-1zM348 384h1v6h-1zM232 393h2v7h-2zM548 388h2v3h-2zM572 382h1v4h-1z" fill="#1113be"/>
<path d="M171 398h1v2h-1zM224 376h1v4h-1z" fill="#09098c"/>
<path d="M172 387h1v4h-1zM532 386h1v5h-1zM570 392h2v8h-2zM576 388h2v3h-2z" fill="#1113bf"/>
<path d="M174 386h1v5h-1zM195 386h2v5h-2zM200 386h1v5h-1zM208 386h2v5h-2z" fill="#181dea"/>
<path d="M174 393h1v3h-1zM250 381h1v5h-1zM219 393h1v7h-1z" fill="#0f10b3"/>
<path d="M174 398h1v2h-1zM230 396h2v4h-2zM273 395h1v4h-1zM529 364h1v5h-1z" fill="#0e0fad"/>
<path d="M176 386h1v5h-1zM224 383h1v3h-1zM565 386h2v5h-2z" fill="#1316cb"/>
<path d="M177 381h1v5h-1zM193 382h1v4h-1zM528 377h1v4h-1z" fill="#1011b8"/>
<path d="M177 386h1v5h-1z" fill="#1417d3"/>
<path d="M177 392h1v4h-1z" fill="#0e0faf"/>
<path d="M178 382h2v4h-2zM564 386h1v5h-1z" fill="#1316ca"/>
<path d="M178 396h2v4h-2zM218 396h1v4h-1z" fill="#080887"/>
<path d="M180 382h2v4h-2zM193 386h1v5h-1zM206 388h1v3h-1zM207 381h1v5h-1zM210 387h1v4h-1zM237 388h1v3h-1zM536 382h2v4h-2zM542 388h1v3h-1zM556 384h1v2h-1z" fill="#171be3"/>
<path d="M180 386h2v5h-2z" fill="#1518d5"/>
<path d="M184 386h1v5h-1zM218 386h1v5h-1zM530 384h2v2h-2z" fill="#1114c1"/>
<path d="M185 383h1v3h-1z" fill="#0f11b3"/>
<path d="M185 386h1v5h-1zM234 387h1v4h-1z" fill="#161adc"/>
<path d="M186 376h2v4h-2zM186 392h2v4h-2zM229 393h1v3h-1zM232 381h1v5h-1zM232 396h1v4h-1zM233 381h1v5h-1zM229 393h2v7h-2zM557 392h1v8h-1z" fill="#0f11b4"/>
<path d="M186 387h2v4h-2zM225 383h2v3h-2zM552 384h1v2h-1zM558 382h1v4h-1z" fill="#1418d4"/>
<path d="M188 377h2v3h-2zM221 392h1v4h-1zM250 398h1v2h-1zM290 382h1v8h-1zM349 382h1v8h-1zM572 393h1v7h-1z" fill="#0a0a97"/>
<path d="M188 392h2v4h-2zM206 397h1v3h-1zM241 398h1v2h-1z" fill="#0d0ea9"/>
<path d="M190 388h1v3h-1zM251 381h2v5h-2zM286 384h1v6h-1zM227 393h1v7h-1zM228 392h1v8h-1zM563 383h1v3h-1z" fill="#1215c6"/>
<path d="M191 382h2v4h-2zM232 388h1v3h-1z" fill="#161be1"/>
<path d="M193 396h1v4h-1zM232 394h1v2h-1zM355 383h1v7h-1zM539 392h1v8h-1z" fill="#0b0b9b"/>
<path d="M194 381h1v5h-1zM532 383h1v3h-1z" fill="#1519db"/>
<path d="M194 388h1v3h-1z" fill="#1315c9"/>
<path d="M194 393h1v3h-1z" fill="#0c0da5"/>
<path d="M195 396h2v4h-2z" fill="#080889"/>
<path d="M197 386h1v5h-1z" fill="#191ff0"/>
<path d="M197 396h1v4h-1zM234 396h1v4h-1zM565 365h2v4h-2z" fill="#09098e"/>
<path d="M198 381h1v5h-1zM255 382h1v4h-1z" fill="#1418d5"/>
<path d="M198 392h1v4h-1zM553 387h1v4h-1z" fill="#1113bd"/>
<path d="M198 396h1v4h-1zM212 392h1v8h-1z" fill="#0b0b99"/>
<path d="M199 392h1v4h-1zM292 382h1v8h-1zM302 382h1v8h-1zM321 393h1v6h-1zM538 393h1v7h-1z" fill="#0e0fac"/>
<path d="M200 396h1v4h-1zM228 394h1v2h-1zM569 392h1v8h-1z" fill="#0b0c9e"/>
<path d="M201 377h2v3h-2zM311 382h2v8h-2zM530 394h2v6h-2z" fill="#0a0a98"/>
<path d="M201 388h2v3h-2z" fill="#1012ba"/>
<path d="M203 388h1v3h-1zM540 386h1v5h-1zM546 387h2v4h-2z" fill="#181dec"/>
<path d="M205 383h1v3h-1zM299 382h2v8h-2zM539 382h1v4h-1z" fill="#1214c5"/>
<path d="M205 396h1v4h-1z" fill="#070781"/>
<path d="M208 381h2v5h-2zM257 392h1v4h-1zM353 382h2v8h-2zM543 383h1v3h-1zM559 382h1v4h-1z" fill="#1214c4"/>
<path d="M208 396h2v4h-2zM224 397h1v3h-1z" fill="#08088a"/>
<path d="M213 382h1v4h-1zM260 383h2v3h-2zM528 384h1v2h-1zM538 382h1v4h-1zM576 392h2v8h-2z" fill="#0f11b5"/>
<path d="M213 388h1v3h-1zM225 387h2v4h-2zM257 386h1v5h-1z" fill="#181ded"/>
<path d="M215 383h1v3h-1zM219 381h1v5h-1zM563 386h1v5h-1z" fill="#171ce7"/>
<path d="M219 397h1v3h-1zM203 393h2v7h-2z" fill="#0a0a96"/>
<path d="M221 383h1v3h-1zM550 384h2v2h-2zM569 386h1v5h-1z" fill="#181ce8"/>
<path d="M221 388h1v3h-1z" fill="#181ce9"/>
<path d="M221 398h1v2h-1zM332 393h1v6h-1zM261 394h1v6h-1zM560 392h1v8h-1zM579 392h2v8h-2z" fill="#0b0b9c"/>
<path d="M222 382h1v4h-1zM228 386h1v5h-1zM543 386h1v5h-1z" fill="#1519d8"/>
<path d="M223 387h1v4h-1z" fill="#191ded"/>
<path d="M224 387h1v4h-1zM533 387h1v4h-1z" fill="#1619dc"/>
<path d="M225 394h2v2h-2zM529 383h1v3h-1z" fill="#0e10b1"/>
<path d="M229 388h1v3h-1z" fill="#1922f1"/>
<path d="M230 386h2v5h-2z" fill="#171ce5"/>
<path d="M233 386h1v5h-1z" fill="#1417d1"/>
<path d="M234 392h1v4h-1z" fill="#0d0ea8"/>
<path d="M235 386h1v5h-1zM264 382h1v4h-1zM556 387h1v4h-1zM567 388h1v3h-1z" fill="#1114c3"/>
<path d="M235 393h1v3h-1zM210 393h1v7h-1zM254 392h1v8h-1zM569 377h1v4h-1z" fill="#0e10af"/>
<path d="M237 393h1v3h-1zM245 386h1v5h-1z" fill="#1012bc"/>
<path d="M240 387h1v4h-1zM246 387h1v4h-1zM248 387h2v4h-2zM561 387h1v4h-1zM574 383h2v3h-2z" fill="#1215c7"/>
<path d="M243 396h2v4h-2z" fill="#070782"/>
<path d="M250 394h1v2h-1z" fill="#0b0c9f"/>
<path d="M251 396h2v4h-2zM336 393h2v6h-2zM540 393h1v7h-1z" fill="#0a0a93"/>
<path d="M253 375h2v5h-2zM253 394h2v2h-2zM278 394h1v5h-1z" fill="#0c0ca0"/>
<path d="M255 376h1v4h-1z" fill="#0f11b7"/>
<path d="M258 388h1v3h-1z" fill="#1316ce"/>
<path d="M278 382h1v8h-1zM568 387h1v4h-1zM570 386h2v5h-2z" fill="#1215c5"/>
<path d="M280 382h1v8h-1z" fill="#0d0ea6"/>
<path d="M287 383h1v7h-1zM208 393h2v7h-2z" fill="#0d0eaa"/>
<path d="M298 393h1v6h-1z" fill="#090990"/>
<path d="M317 394h1v5h-1z" fill="#080888"/>
<path d="M336 383h2v7h-2zM557 383h1v3h-1z" fill="#1013bc"/>
<path d="M258 392h1v8h-1z" fill="#0d0faa"/>
<path d="M259 393h1v7h-1zM538 386h1v5h-1z" fill="#1417cf"/>
<path d="M548 392h2v8h-2z" fill="#0f10b1"/>
<path d="M554 384h2v2h-2zM568 382h1v4h-1z" fill="#1418d3"/>
<path d="M560 387h1v4h-1zM576 382h2v4h-2z" fill="#171ce6"/>
<path d="M570 377h2v4h-2zM573 394h1v6h-1z" fill="#0a0a95"/>
<path d="M573 388h1v3h-1z" fill="#1215c8"/>
<path d="M578 388h1v3h-1z" fill="#181ce7"/>
<rect x="215.5" y="802.5" width="151.0" height="148.0" fill="none" stroke="#000" stroke-width="1"/>
<path d="M215.5 802.5h-9M215.5 804.5h-4M215.5 806.5h-4M215.5 808.5h-4M215.5 809.5h-4M215.5 811.5h-4M215.5 813.5h-4M215.5 815.5h-4M215.5 817.5h-4M215.5 819.5h-4M215.5 821.5h-9M215.5 822.5h-4M215.5 824.5h-4M215.5 826.5h-4M215.5 828.5h-4M215.5 830.5h-4M215.5 832.5h-4M215.5 833.5h-4M215.5 835.5h-4M215.5 837.5h-4M215.5 839.5h-9M215.5 841.5h-4M215.5 843.5h-4M215.5 845.5h-4M215.5 846.5h-4M215.5 848.5h-4M215.5 850.5h-4M215.5 852.5h-4M215.5 854.5h-4M215.5 856.5h-4M215.5 858.5h-9M215.5 859.5h-4M215.5 861.5h-4M215.5 863.5h-4M215.5 865.5h-4M215.5 867.5h-4M215.5 869.5h-4M215.5 870.5h-4M215.5 872.5h-4M215.5 874.5h-4M215.5 876.5h-9M215.5 878.5h-4M215.5 880.5h-4M215.5 882.5h-4M215.5 883.5h-4M215.5 885.5h-4M215.5 887.5h-4M215.5 889.5h-4M215.5 891.5h-4M215.5 893.5h-4M215.5 895.5h-9M215.5 896.5h-4M215.5 898.5h-4M215.5 900.5h-4M215.5 902.5h-4M215.5 904.5h-4M215.5 906.5h-4M215.5 907.5h-4M215.5 909.5h-4M215.5 911.5h-4M215.5 913.5h-9M215.5 915.5h-4M215.5 917.5h-4M215.5 919.5h-4M215.5 920.5h-4M215.5 922.5h-4M215.5 924.5h-4M215.5 926.5h-4M215.5 928.5h-4M215.5 930.5h-4M215.5 932.5h-9M215.5 933.5h-4M215.5 935.5h-4M215.5 937.5h-4M215.5 939.5h-4M215.5 941.5h-4M215.5 943.5h-4M215.5 944.5h-4M215.5 946.5h-4M215.5 948.5h-4M215.5 950.5h-9" stroke="#000" stroke-width="1" fill="none"/>
<path d="M215.5 950.5v9M234.5 950.5v5M253.5 950.5v9M272.5 950.5v5M291.5 950.5v9M309.5 950.5v5M328.5 950.5v9M347.5 950.5v5M366.5 950.5v9" stroke="#000" stroke-width="1" fill="none"/>
<text x="201.2" y="807.7" font-size="13.8" text-anchor="end" textLength="26.4" lengthAdjust="spacingAndGlyphs">−40.</text>
<text x="201.2" y="826.2" font-size="13.8" text-anchor="end" textLength="26.4" lengthAdjust="spacingAndGlyphs">−30.</text>
<text x="201.2" y="844.7" font-size="13.8" text-anchor="end" textLength="26.4" lengthAdjust="spacingAndGlyphs">−20.</text>
<text x="201.2" y="863.2" font-size="13.8" text-anchor="end" textLength="26.4" lengthAdjust="spacingAndGlyphs">−10.</text>
<text x="201.2" y="881.7" font-size="13.8" text-anchor="end" textLength="12.5" lengthAdjust="spacingAndGlyphs">0.</text>
<text x="201.2" y="900.2" font-size="13.8" text-anchor="end" textLength="19.5" lengthAdjust="spacingAndGlyphs">10.</text>
<text x="201.2" y="918.7" font-size="13.8" text-anchor="end" textLength="19.5" lengthAdjust="spacingAndGlyphs">20.</text>
<text x="201.2" y="937.2" font-size="13.8" text-anchor="end" textLength="19.5" lengthAdjust="spacingAndGlyphs">30.</text>
<text x="201.2" y="955.7" font-size="13.8" text-anchor="end" textLength="19.5" lengthAdjust="spacingAndGlyphs">40.</text>
<text x="215.5" y="976" font-size="13.8" text-anchor="middle" textLength="19.5" lengthAdjust="spacingAndGlyphs">40.</text>
<text x="253.25" y="976" font-size="13.8" text-anchor="middle" textLength="19.5" lengthAdjust="spacingAndGlyphs">20.</text>
<text x="291.0" y="976" font-size="13.8" text-anchor="middle" textLength="12.5" lengthAdjust="spacingAndGlyphs">0.</text>
<text x="328.75" y="976" font-size="13.8" text-anchor="middle" textLength="26" lengthAdjust="spacingAndGlyphs">−20.</text>
<text x="366.5" y="976" font-size="13.8" text-anchor="middle" textLength="26" lengthAdjust="spacingAndGlyphs">−40.</text>
<text x="291.0" y="995" font-size="13.5" text-anchor="middle" textLength="40.2" lengthAdjust="spacingAndGlyphs">KSM−X</text>
<text transform="translate(165.2,876.5) rotate(-90)" font-size="13.5" text-anchor="middle" textLength="41.6" lengthAdjust="spacingAndGlyphs">KSM−Y</text>
<defs><clipPath id="oc1"><rect x="216.0" y="803.0" width="150.0" height="147.0"/></clipPath></defs>
<g clip-path="url(#oc1)" fill="none">
<path d="M248.7 802.6L244.0 811.5L239.0 819.2L232.6 833.6L230.4 841.7L227.8 854.1L226.0 864.0L225.4 876.5L226.0 889.0L227.8 898.9L230.4 911.3L232.6 919.4L239.0 933.8L244.0 941.5L248.7 950.4" stroke="#0000ff" stroke-width="1.4" stroke-dasharray="2.3 1.2"/>
<path d="M283.8 802.6L275.0 810.5L266.2 818.4L256.6 832.1L249.4 844.9L246.4 853.3L243.2 863.3L242.6 872.5L242.6 876.5L242.6 880.5L243.2 889.7L246.4 899.7L249.4 908.1L256.6 920.9L266.2 934.6L275.0 942.5L283.8 950.4" stroke="#6e3c0a" stroke-width="1.4" stroke-dasharray="2.3 1.2"/>
</g>
<ellipse cx="291.4" cy="877.7" rx="34.2" ry="37.3" fill="none" stroke="#000" stroke-width="1.4"/>
<path d="M325.5 875.6C318 871 300 870 291 873.5C287.5 875 289 878.5 293 879.5C302 881.5 318 880 325.5 876.5" fill="none" stroke="#000" stroke-width="1.4"/>
<path d="M311 871.5C312 868.5 322 868.6 325 870.5L325 874.6L312 874C310.5 873.5 310.5 872.5 311 871.5Z" fill="#0000ff"/>
<path d="M315.8 867.0L324.59999999999997 875.8M324.59999999999997 867.0L315.8 875.8" stroke="#ff0000" stroke-width="1.1"/>
<circle cx="268.9" cy="906.5" r="2.6" fill="#ff0000"/>
<rect x="509.5" y="802.5" width="151.0" height="148.0" fill="none" stroke="#000" stroke-width="1"/>
<path d="M509.5 802.5h-9M509.5 804.5h-4M509.5 806.5h-4M509.5 808.5h-4M509.5 809.5h-4M509.5 811.5h-4M509.5 813.5h-4M509.5 815.5h-4M509.5 817.5h-4M509.5 819.5h-4M509.5 821.5h-9M509.5 822.5h-4M509.5 824.5h-4M509.5 826.5h-4M509.5 828.5h-4M509.5 830.5h-4M509.5 832.5h-4M509.5 833.5h-4M509.5 835.5h-4M509.5 837.5h-4M509.5 839.5h-9M509.5 841.5h-4M509.5 843.5h-4M509.5 845.5h-4M509.5 846.5h-4M509.5 848.5h-4M509.5 850.5h-4M509.5 852.5h-4M509.5 854.5h-4M509.5 856.5h-4M509.5 858.5h-9M509.5 859.5h-4M509.5 861.5h-4M509.5 863.5h-4M509.5 865.5h-4M509.5 867.5h-4M509.5 869.5h-4M509.5 870.5h-4M509.5 872.5h-4M509.5 874.5h-4M509.5 876.5h-9M509.5 878.5h-4M509.5 880.5h-4M509.5 882.5h-4M509.5 883.5h-4M509.5 885.5h-4M509.5 887.5h-4M509.5 889.5h-4M509.5 891.5h-4M509.5 893.5h-4M509.5 895.5h-9M509.5 896.5h-4M509.5 898.5h-4M509.5 900.5h-4M509.5 902.5h-4M509.5 904.5h-4M509.5 906.5h-4M509.5 907.5h-4M509.5 909.5h-4M509.5 911.5h-4M509.5 913.5h-9M509.5 915.5h-4M509.5 917.5h-4M509.5 919.5h-4M509.5 920.5h-4M509.5 922.5h-4M509.5 924.5h-4M509.5 926.5h-4M509.5 928.5h-4M509.5 930.5h-4M509.5 932.5h-9M509.5 933.5h-4M509.5 935.5h-4M509.5 937.5h-4M509.5 939.5h-4M509.5 941.5h-4M509.5 943.5h-4M509.5 944.5h-4M509.5 946.5h-4M509.5 948.5h-4M509.5 950.5h-9" stroke="#000" stroke-width="1" fill="none"/>
<path d="M509.5 950.5v9M528.5 950.5v5M547.5 950.5v9M566.5 950.5v5M585.5 950.5v9M603.5 950.5v5M622.5 950.5v9M641.5 950.5v5M660.5 950.5v9" stroke="#000" stroke-width="1" fill="none"/>
<text x="495.2" y="807.7" font-size="13.8" text-anchor="end" textLength="19.5" lengthAdjust="spacingAndGlyphs">40.</text>
<text x="495.2" y="826.2" font-size="13.8" text-anchor="end" textLength="19.5" lengthAdjust="spacingAndGlyphs">30.</text>
<text x="495.2" y="844.7" font-size="13.8" text-anchor="end" textLength="19.5" lengthAdjust="spacingAndGlyphs">20.</text>
<text x="495.2" y="863.2" font-size="13.8" text-anchor="end" textLength="19.5" lengthAdjust="spacingAndGlyphs">10.</text>
<text x="495.2" y="881.7" font-size="13.8" text-anchor="end" textLength="12.5" lengthAdjust="spacingAndGlyphs">0.</text>
<text x="495.2" y="900.2" font-size="13.8" text-anchor="end" textLength="26.4" lengthAdjust="spacingAndGlyphs">−10.</text>
<text x="495.2" y="918.7" font-size="13.8" text-anchor="end" textLength="26.4" lengthAdjust="spacingAndGlyphs">−20.</text>
<text x="495.2" y="937.2" font-size="13.8" text-anchor="end" textLength="26.4" lengthAdjust="spacingAndGlyphs">−30.</text>
<text x="495.2" y="955.7" font-size="13.8" text-anchor="end" textLength="26.4" lengthAdjust="spacingAndGlyphs">−40.</text>
<text x="509.5" y="976" font-size="13.8" text-anchor="middle" textLength="19.5" lengthAdjust="spacingAndGlyphs">40.</text>
<text x="547.25" y="976" font-size="13.8" text-anchor="middle" textLength="19.5" lengthAdjust="spacingAndGlyphs">20.</text>
<text x="585.0" y="976" font-size="13.8" text-anchor="middle" textLength="12.5" lengthAdjust="spacingAndGlyphs">0.</text>
<text x="622.75" y="976" font-size="13.8" text-anchor="middle" textLength="26" lengthAdjust="spacingAndGlyphs">−20.</text>
<text x="660.5" y="976" font-size="13.8" text-anchor="middle" textLength="26" lengthAdjust="spacingAndGlyphs">−40.</text>
<text x="585.0" y="995" font-size="13.5" text-anchor="middle" textLength="40.2" lengthAdjust="spacingAndGlyphs">KSM−X</text>
<text transform="translate(459.2,876.5) rotate(-90)" font-size="13.5" text-anchor="middle" textLength="41.6" lengthAdjust="spacingAndGlyphs">KSM−Z</text>
<defs><clipPath id="oc2"><rect x="510.0" y="803.0" width="150.0" height="147.0"/></clipPath></defs>
<g clip-path="url(#oc2)" fill="none">
<path d="M542.7 802.6L538.0 811.5L533.0 819.2L526.6 833.6L524.4 841.7L521.8 854.1L520.0 864.0L519.4 876.5L520.0 889.0L521.8 898.9L524.4 911.3L526.6 919.4L533.0 933.8L538.0 941.5L542.7 950.4" stroke="#0000ff" stroke-width="1.4" stroke-dasharray="2.3 1.2"/>
<path d="M577.8 802.6L569.0 810.5L560.2 818.4L550.6 832.1L543.4 844.9L540.4 853.3L537.2 863.3L536.6 872.5L536.6 876.5L536.6 880.5L537.2 889.7L540.4 899.7L543.4 908.1L550.6 920.9L560.2 934.6L569.0 942.5L577.8 950.4" stroke="#6e3c0a" stroke-width="1.4" stroke-dasharray="2.3 1.2"/>
</g>
<path d="M551.3 893.8L619.6 859.5" fill="none" stroke="#000" stroke-width="1.4"/>
<path d="M619.6 859.5C622 855 618 855 613 855.5C604 856.5 592 864 586 871.5C582 876 583 879.5 588 879.5C596 879.5 608 872 616 863.5C618 861.5 619.5 860 619.6 859.5" fill="none" stroke="#000" stroke-width="1.4"/>
<path d="M605 857.5C603.5 856 605.5 852.5 610 852C614 851.5 618 852 618 854L618 857.5Z" fill="#0000ff"/>
<path d="M610.0 848.9L618.8 857.6999999999999M618.8 848.9L610.0 857.6999999999999" stroke="#ff0000" stroke-width="1.1"/>
<circle cx="563.3" cy="887.5" r="2.6" fill="#ff0000"/>
<rect x="803.5" y="802.5" width="151.0" height="148.0" fill="none" stroke="#000" stroke-width="1"/>
<path d="M803.5 802.5h-9M803.5 804.5h-4M803.5 806.5h-4M803.5 808.5h-4M803.5 809.5h-4M803.5 811.5h-4M803.5 813.5h-4M803.5 815.5h-4M803.5 817.5h-4M803.5 819.5h-4M803.5 821.5h-9M803.5 822.5h-4M803.5 824.5h-4M803.5 826.5h-4M803.5 828.5h-4M803.5 830.5h-4M803.5 832.5h-4M803.5 833.5h-4M803.5 835.5h-4M803.5 837.5h-4M803.5 839.5h-9M803.5 841.5h-4M803.5 843.5h-4M803.5 845.5h-4M803.5 846.5h-4M803.5 848.5h-4M803.5 850.5h-4M803.5 852.5h-4M803.5 854.5h-4M803.5 856.5h-4M803.5 858.5h-9M803.5 859.5h-4M803.5 861.5h-4M803.5 863.5h-4M803.5 865.5h-4M803.5 867.5h-4M803.5 869.5h-4M803.5 870.5h-4M803.5 872.5h-4M803.5 874.5h-4M803.5 876.5h-9M803.5 878.5h-4M803.5 880.5h-4M803.5 882.5h-4M803.5 883.5h-4M803.5 885.5h-4M803.5 887.5h-4M803.5 889.5h-4M803.5 891.5h-4M803.5 893.5h-4M803.5 895.5h-9M803.5 896.5h-4M803.5 898.5h-4M803.5 900.5h-4M803.5 902.5h-4M803.5 904.5h-4M803.5 906.5h-4M803.5 907.5h-4M803.5 909.5h-4M803.5 911.5h-4M803.5 913.5h-9M803.5 915.5h-4M803.5 917.5h-4M803.5 919.5h-4M803.5 920.5h-4M803.5 922.5h-4M803.5 924.5h-4M803.5 926.5h-4M803.5 928.5h-4M803.5 930.5h-4M803.5 932.5h-9M803.5 933.5h-4M803.5 935.5h-4M803.5 937.5h-4M803.5 939.5h-4M803.5 941.5h-4M803.5 943.5h-4M803.5 944.5h-4M803.5 946.5h-4M803.5 948.5h-4M803.5 950.5h-9" stroke="#000" stroke-width="1" fill="none"/>
<path d="M803.5 950.5v9M822.5 950.5v5M841.5 950.5v9M860.5 950.5v5M879.5 950.5v9M897.5 950.5v5M916.5 950.5v9M935.5 950.5v5M954.5 950.5v9" stroke="#000" stroke-width="1" fill="none"/>
<text x="789.2" y="807.7" font-size="13.8" text-anchor="end" textLength="19.5" lengthAdjust="spacingAndGlyphs">40.</text>
<text x="789.2" y="826.2" font-size="13.8" text-anchor="end" textLength="19.5" lengthAdjust="spacingAndGlyphs">30.</text>
<text x="789.2" y="844.7" font-size="13.8" text-anchor="end" textLength="19.5" lengthAdjust="spacingAndGlyphs">20.</text>
<text x="789.2" y="863.2" font-size="13.8" text-anchor="end" textLength="19.5" lengthAdjust="spacingAndGlyphs">10.</text>
<text x="789.2" y="881.7" font-size="13.8" text-anchor="end" textLength="12.5" lengthAdjust="spacingAndGlyphs">0.</text>
<text x="789.2" y="900.2" font-size="13.8" text-anchor="end" textLength="26.4" lengthAdjust="spacingAndGlyphs">−10.</text>
<text x="789.2" y="918.7" font-size="13.8" text-anchor="end" textLength="26.4" lengthAdjust="spacingAndGlyphs">−20.</text>
<text x="789.2" y="937.2" font-size="13.8" text-anchor="end" textLength="26.4" lengthAdjust="spacingAndGlyphs">−30.</text>
<text x="789.2" y="955.7" font-size="13.8" text-anchor="end" textLength="26.4" lengthAdjust="spacingAndGlyphs">−40.</text>
<text x="803.5" y="976" font-size="13.8" text-anchor="middle" textLength="26" lengthAdjust="spacingAndGlyphs">−40.</text>
<text x="841.25" y="976" font-size="13.8" text-anchor="middle" textLength="26" lengthAdjust="spacingAndGlyphs">−20.</text>
<text x="879.0" y="976" font-size="13.8" text-anchor="middle" textLength="12.5" lengthAdjust="spacingAndGlyphs">0.</text>
<text x="916.75" y="976" font-size="13.8" text-anchor="middle" textLength="19.5" lengthAdjust="spacingAndGlyphs">20.</text>
<text x="954.5" y="976" font-size="13.8" text-anchor="middle" textLength="19.5" lengthAdjust="spacingAndGlyphs">40.</text>
<text x="879.0" y="995" font-size="13.5" text-anchor="middle" textLength="40.2" lengthAdjust="spacingAndGlyphs">KSM−Y</text>
<text transform="translate(753.2,876.5) rotate(-90)" font-size="13.5" text-anchor="middle" textLength="41.6" lengthAdjust="spacingAndGlyphs">KSM−Z</text>
<defs><clipPath id="oc3"><rect x="804.0" y="803.0" width="150.0" height="147.0"/></clipPath></defs>
<g clip-path="url(#oc3)" fill="none">
<circle cx="878.8" cy="876.4" r="96.5" stroke="#6e3c0a" stroke-width="1.4" stroke-dasharray="2.3 1.2"/>
</g>
<ellipse cx="880.5" cy="876.9" rx="38" ry="16.5" fill="none" stroke="#000" stroke-width="1.4"/>
<path d="M873.6 857.5L878 877.5C878.5 879.5 881.5 879.5 881.5 877.5L880.5 866C880 862 879 859 877.5 857.5" fill="none" stroke="#000" stroke-width="1.4"/>
<circle cx="874.2" cy="855.2" r="3" fill="#0000ff"/>
<path d="M870.0 848.9L878.8 857.6999999999999M878.8 848.9L870.0 857.6999999999999" stroke="#ff0000" stroke-width="1.1"/>
<circle cx="909.6" cy="887.5" r="2.6" fill="#ff0000"/>
</svg></body></html>
